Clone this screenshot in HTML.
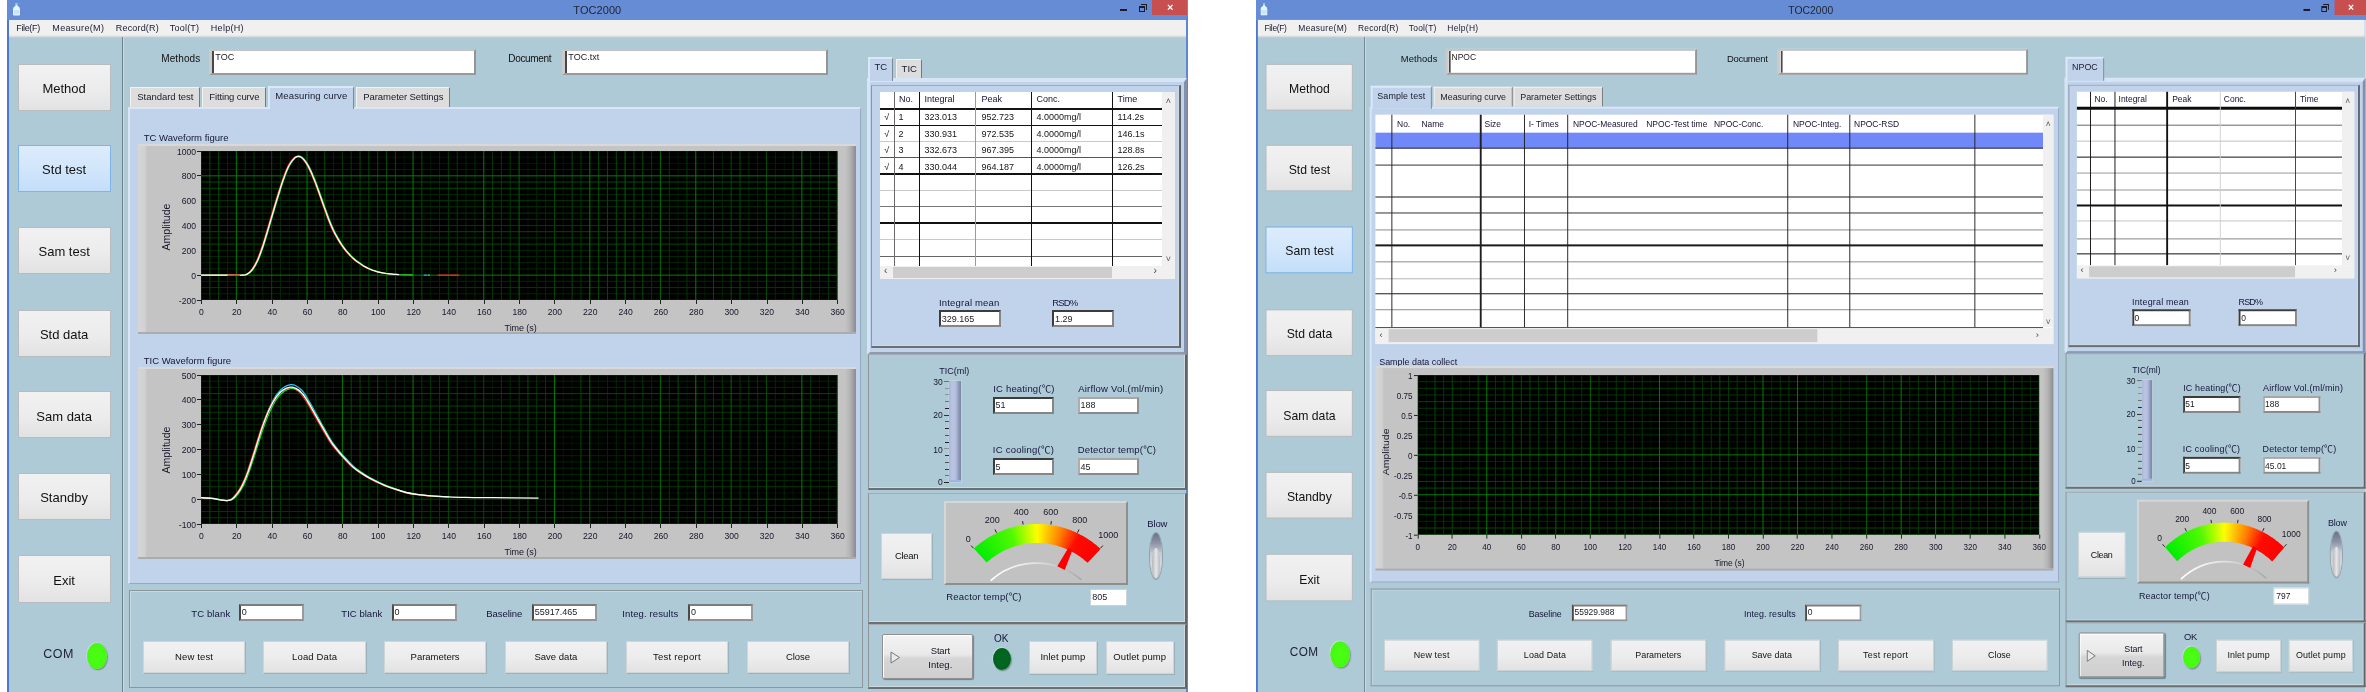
<!DOCTYPE html><html><head><meta charset="utf-8"><title>TOC2000</title><style>
html,body{margin:0;padding:0;background:#fff;}
body{width:2366px;height:692px;overflow:hidden;position:relative;font-family:"Liberation Sans","Noto Sans CJK SC",sans-serif;}
.win{position:absolute;top:0;width:1181px;height:696px;overflow:hidden;transform-origin:0 0;filter:blur(0.45px);}
.win div,.win svg,.win span.t{position:absolute;}
.a{position:absolute;}
span.t{white-space:nowrap;display:block;}
.btn{box-sizing:border-box;border:1px solid #b9bcbe;background:linear-gradient(180deg,#f1f1f1 0,#ececec 55%,#e2e2e2 100%);}
.btn.sm{border-color:#cfd4d6;box-shadow:0.5px 1px 0.5px rgba(120,135,140,.35);}
.btn.act{border-color:#7eb4ea;background:linear-gradient(180deg,#dcecfc 0,#d2e6fb 50%,#c3defa 100%);}
.sbtn{box-sizing:border-box;border:1px solid #8f8f8f;border-radius:2px;
  background:linear-gradient(180deg,#f3f3f3 0,#e9e9e9 45%,#d6d6d6 55%,#cfcfcf 100%);
  box-shadow:inset 1px 1px 0 #fff,1px 1px 1px rgba(0,0,0,.35);}
.inp{box-sizing:border-box;background:#fff;border-style:solid;border-width:2px;
  border-color:#3c3c3c #868686 #868686 #3c3c3c;}
.inp.md{border-color:#7c7c7c #9a9a9a #929292 #4a4a4a;}
.inp.lt{border-color:#a6a6a6 #909090 #8a8a8a #adadad;}
.inp.lg{border-width:2px 2px 2px 3px;border-color:#c4c4c4 #949494 #9a9a9a #cbcbcb;box-shadow:inset 2px 0 0 #484848;}
.tab{box-sizing:border-box;background:#dddddd;border-left:1px solid #f2f2f2;border-top:1px solid #f2f2f2;
  border-right:1.5px solid #767a80;}
.tab.on{background:#c0d3eb;border-left:2px solid #dbe8f8;border-top:2px solid #dbe8f8;border-right:1px solid #7f8894;}
.tpanel{box-sizing:border-box;background:#c0d3eb;border-left:2px solid #d8e6f8;border-top:2px solid #d8e6f8;
  border-right:1px solid #97a8c2;border-bottom:1px solid #97a8c2;}
.tpanel.r{border-left:3px solid #d6e4f6;border-top:4px solid #d6e4f6;border-right:3px solid #8191ad;border-bottom:3px solid #8b9bb6;}
.etch2{box-sizing:border-box;border:1.4px solid #8d969b;box-shadow:inset 1px 1px 0 #c6d8e0;}
.etch{box-sizing:border-box;border-style:solid;border-width:1.5px 2px 2px 1.5px;
  border-color:#a4aaae #5e6468 #6a7074 #8e9498;box-shadow:inset -1px -1px 0 #cedadf;}
.cframe{box-sizing:border-box;border-top:2px solid #d9d9d9;border-bottom:2px solid #acacac;
  background:linear-gradient(90deg,#d6d6d6 0,#d1d1d1 7px,#c4c4c4 9px,#c4c4c4 calc(100% - 11px),#b4b4b4 calc(100% - 6px),#8c8c8c 100%);}
.cframe.g{border:2px solid;border-color:#d6d6d6 #8e8e8e #8e8e8e #d6d6d6;background:#c2c2c2;}
</style></head><body>
<div class="win" style="left:7.3px;"><div style="left:0px;top:0px;width:1180px;height:696px;background:#aecad6;"></div><div style="left:0px;top:0px;width:1181px;height:20px;background:#668cd6;"></div><svg class="a" style="left:4.3px;top:3px" width="9" height="13" viewBox="0 0 9 13"><path d="M3.6 0.3 h1.8 v2.4 c1.6 0.8 2.6 2 2.6 3.6 v5.2 a0.9 0.9 0 0 1 -0.9 0.9 h-5.2 a0.9 0.9 0 0 1 -0.9 -0.9 v-5.2 c0 -1.6 1 -2.8 2.6 -3.6z" fill="#eaf6ff"/><path d="M1.6 7 h5.8 v4.4 h-5.8z" fill="#c4e6ff"/><path d="M3.6 0.3 h1.8 v1.6 h-1.8z" fill="#7fc4ff"/></svg><span class="t" style="left:566.0px;top:2.5px;height:15px;line-height:15px;font-size:11px;color:#1e2432;letter-spacing:0.07px;">TOC2000</span><div style="left:1112.5px;top:8.5px;width:7px;height:2px;background:#1b1b2a;"></div><div style="left:1131.5px;top:6px;width:6px;height:6px;border:1px solid #1b1b2a;border-top-width:2px;box-sizing:border-box;"></div><div style="left:1133.5px;top:4px;width:6px;height:6px;border:1px solid #1b1b2a;border-left:none;border-bottom:none;box-sizing:border-box;"></div><div style="left:1145px;top:0px;width:34.5px;height:15.3px;background:#c84f4f;"></div><span class="t" style="left:1159.8px;top:-0.5px;height:15px;line-height:15px;font-size:11px;color:#fff;font-weight:bold;">×</span><div style="left:1px;top:20px;width:1178px;height:17.5px;background:linear-gradient(180deg,#f0f0f0 0,#f0f0f0 15px,#d2d5d6 17px,#c0ccd0 17.5px);"></div><span class="t" style="left:9.0px;top:21.5px;height:13px;line-height:13px;font-size:9px;color:#1a1a30;letter-spacing:-0.36px;">File(F)</span><span class="t" style="left:45.0px;top:21.5px;height:13px;line-height:13px;font-size:9px;color:#1a1a30;letter-spacing:0.35px;">Measure(M)</span><span class="t" style="left:108.5px;top:21.5px;height:13px;line-height:13px;font-size:9px;color:#1a1a30;letter-spacing:0.17px;">Record(R)</span><span class="t" style="left:162.5px;top:21.5px;height:13px;line-height:13px;font-size:9px;color:#1a1a30;letter-spacing:0.21px;">Tool(T)</span><span class="t" style="left:203.5px;top:21.5px;height:13px;line-height:13px;font-size:9px;color:#1a1a30;letter-spacing:0.29px;">Help(H)</span><div style="left:0px;top:20px;width:1.6px;height:676px;background:#4f78cc;"></div><div style="left:1179px;top:15px;width:2px;height:681px;background:#5f86d2;"></div><div style="left:115px;top:37px;width:1px;height:659px;background:#6f7f88;"></div><div style="left:116px;top:37px;width:1px;height:659px;background:#c9dde6;"></div><div class="btn big" style="left:10.3px;top:63.6px;width:93px;height:47.2px;"></div><span class="t" style="left:35.1px;top:79.8px;height:18px;line-height:18px;font-size:13px;color:#111;">Method</span><div class="btn big act" style="left:10.3px;top:145px;width:93px;height:47.2px;"></div><span class="t" style="left:34.8px;top:161.2px;height:18px;line-height:18px;font-size:13px;color:#111;">Std test</span><div class="btn big" style="left:10.3px;top:227px;width:93px;height:47.2px;"></div><span class="t" style="left:31.2px;top:243.2px;height:18px;line-height:18px;font-size:13px;color:#111;">Sam test</span><div class="btn big" style="left:10.3px;top:309.5px;width:93px;height:47.2px;"></div><span class="t" style="left:32.6px;top:325.7px;height:18px;line-height:18px;font-size:13px;color:#111;">Std data</span><div class="btn big" style="left:10.3px;top:391.3px;width:93px;height:47.2px;"></div><span class="t" style="left:29.0px;top:407.5px;height:18px;line-height:18px;font-size:13px;color:#111;">Sam data</span><div class="btn big" style="left:10.3px;top:472.8px;width:93px;height:47.2px;"></div><span class="t" style="left:32.9px;top:489.0px;height:18px;line-height:18px;font-size:13px;color:#111;">Standby</span><div class="btn big" style="left:10.3px;top:555.4px;width:93px;height:47.2px;"></div><span class="t" style="left:46.0px;top:571.6px;height:18px;line-height:18px;font-size:13px;color:#111;">Exit</span><span class="t" style="left:36.0px;top:644.5px;height:18px;line-height:18px;font-size:12.5px;color:#223;letter-spacing:0.45px;">COM</span><div class="a" style="left:79.3px;top:642.8px;width:20.5px;height:26.5px;border-radius:50%;background:radial-gradient(ellipse at 50% 50%,#4aff12 0,#45f812 80%,#52e030 100%);box-shadow:1px 1.2px 1.2px #7d8f90,-0.6px -0.6px 1px #d6e6ea;"></div><span class="t" style="left:154.0px;top:52.0px;height:14px;line-height:14px;font-size:10px;color:#111;letter-spacing:0.09px;">Methods</span><div class="inp lg" style="left:202px;top:49px;width:267px;height:26px;"></div><span class="t" style="left:208.0px;top:50.6px;height:13px;line-height:13px;font-size:9px;color:#222;">TOC</span><span class="t" style="left:501.0px;top:52.0px;height:14px;line-height:14px;font-size:10px;color:#111;letter-spacing:-0.32px;">Document</span><div class="inp lg" style="left:555px;top:49px;width:266px;height:26px;"></div><span class="t" style="left:561.0px;top:50.6px;height:13px;line-height:13px;font-size:9px;color:#222;">TOC.txt</span><div class="a tab" style="left:123px;top:87px;width:70px;height:20px;"></div><span class="t" style="left:130.0px;top:90.0px;height:13px;line-height:13px;font-size:9.5px;color:#1a1a2a;letter-spacing:-0.04px;">Standard test</span><div class="a tab" style="left:195px;top:87px;width:64px;height:20px;"></div><span class="t" style="left:202.0px;top:90.0px;height:13px;line-height:13px;font-size:9.5px;color:#1a1a2a;letter-spacing:-0.13px;">Fitting curve</span><div class="a tab" style="left:349px;top:87px;width:94px;height:20px;"></div><span class="t" style="left:356.0px;top:90.0px;height:13px;line-height:13px;font-size:9.5px;color:#1a1a2a;letter-spacing:-0.07px;">Parameter Settings</span><div class="a tpanel" style="left:121px;top:107px;width:733px;height:477px;"></div><div class="a tab on" style="left:261px;top:86px;width:86px;height:23px;"></div><span class="t" style="left:268.0px;top:89.4px;height:13px;line-height:13px;font-size:9.5px;color:#1a1a2a;letter-spacing:0.12px;">Measuring curve</span><span class="t" style="left:136.5px;top:131.0px;height:13px;line-height:13px;font-size:9.5px;color:#151530;">TC Waveform figure</span><div class="a cframe" style="left:130.5px;top:144px;width:718px;height:190px;"></div><svg class="a" style="left:194.2px;top:151px" width="636.2" height="149" viewBox="0 0 636.2 149"><rect width="636.2" height="149" fill="#000"/><path d="M88.36 0V149M203.23 0V149M229.74 0V149M326.94 0V149M362.28 0V149M477.15 0V149M503.66 0V149M583.18 0V149M0 12.42H636.2M0 6.21H636.2" stroke="#001800" stroke-width="1" fill="none"/><path d="M26.51 0V149M61.85 0V149M79.53 0V149M97.20 0V149M114.87 0V149M132.54 0V149M238.58 0V149M265.08 0V149M273.92 0V149M335.77 0V149M344.61 0V149M521.33 0V149M547.84 0V149M556.67 0V149M574.35 0V149M609.69 0V149M618.53 0V149M0 142.79H636.2M0 130.38H636.2M0 117.96H636.2M0 111.75H636.2M0 105.54H636.2M0 99.33H636.2M0 43.46H636.2M0 18.62H636.2M0 0.00H636.2" stroke="#002800" stroke-width="1" fill="none"/><path d="M44.18 0V149M53.02 0V149M141.38 0V149M150.21 0V149M247.41 0V149M256.25 0V149M291.59 0V149M300.43 0V149M309.26 0V149M379.95 0V149M450.64 0V149M468.31 0V149M485.99 0V149M592.02 0V149M627.36 0V149M0 149.00H636.2M0 136.58H636.2M0 86.92H636.2M0 74.50H636.2M0 68.29H636.2M0 62.08H636.2M0 55.88H636.2M0 49.67H636.2" stroke="#003a00" stroke-width="1" fill="none"/><path d="M0.00 0V149M8.84 0V149M17.67 0V149M70.69 0V149M123.71 0V149M159.05 0V149M167.89 0V149M176.72 0V149M185.56 0V149M194.39 0V149M220.90 0V149M353.44 0V149M371.12 0V149M397.62 0V149M406.46 0V149M415.30 0V149M432.97 0V149M441.81 0V149M512.49 0V149M530.17 0V149M539.00 0V149M565.51 0V149M636.20 0V149M0 93.12H636.2M0 80.71H636.2M0 37.25H636.2M0 31.04H636.2" stroke="#004c00" stroke-width="1" fill="none"/><path d="M318.10 0V149M424.13 0V149M459.48 0V149" stroke="#006600" stroke-width="1" fill="none"/><path d="M35.34 0V149M106.03 0V149M212.07 0V149M282.76 0V149M388.79 0V149M494.82 0V149M600.86 0V149M0 124.17H636.2M0 24.83H636.2" stroke="#008200" stroke-width="1" fill="none"/><path d="M-0.6 124.2C2.9 124.2 13.8 124.2 20.6 124.2C27.4 124.2 35.9 124.3 40.0 124.2C44.2 124.0 43.6 124.1 45.3 123.2C47.1 122.2 48.9 120.9 50.6 118.6C52.4 116.3 54.2 113.2 55.9 109.3C57.7 105.3 59.5 100.3 61.2 95.0C63.0 89.7 64.8 83.5 66.5 77.6C68.3 71.7 70.1 65.5 71.8 59.6C73.6 53.7 75.4 47.8 77.1 42.2C78.9 36.6 80.7 30.8 82.4 26.1C84.2 21.3 86.0 16.9 87.7 13.7C89.5 10.5 91.6 8.2 93.0 6.8C94.5 5.4 95.4 5.3 96.6 5.2C97.8 5.2 98.8 5.5 100.1 6.5C101.4 7.6 103.1 9.4 104.5 11.6C106.0 13.8 107.5 16.7 108.9 19.9C110.4 23.0 111.9 26.7 113.4 30.5C114.8 34.3 116.3 38.4 117.8 42.5C119.3 46.6 120.7 50.9 122.2 55.0C123.7 59.1 125.1 63.4 126.6 67.2C128.1 71.0 129.6 74.7 131.0 77.9C132.5 81.1 134.0 83.8 135.5 86.4C136.9 89.0 138.4 91.4 139.9 93.6C141.3 95.8 142.8 97.8 144.3 99.7C145.8 101.5 147.2 103.1 148.7 104.6C150.2 106.1 151.7 107.4 153.1 108.7C154.6 109.9 156.1 110.8 157.5 111.9C159.0 112.9 160.5 114.0 162.0 115.0C163.4 115.9 164.9 116.6 166.4 117.3C167.9 118.0 169.3 118.6 170.8 119.2C172.3 119.7 173.7 120.2 175.2 120.6C176.7 121.0 178.2 121.3 179.6 121.6C181.1 121.9 182.6 122.1 184.1 122.4C185.5 122.6 187.7 122.8 188.5 122.9" stroke="#ff2020" stroke-width="1.3" fill="none"/><path d="M236.8 124.2C240.3 124.2 254.5 124.2 258.0 124.2" stroke="#ff2020" stroke-width="1.4" fill="none"/><path d="M226.7 124.2C227.1 124.2 228.5 124.2 228.9 124.2" stroke="#20e020" stroke-width="1.4" fill="none"/><path d="M0.6 124.2C4.2 124.2 15.1 124.2 21.8 124.2C28.6 124.2 37.1 124.3 41.3 124.2C45.4 124.0 44.8 124.1 46.6 123.2C48.3 122.2 50.1 120.9 51.9 118.6C53.6 116.3 55.4 113.2 57.2 109.3C58.9 105.3 60.7 100.3 62.5 95.0C64.2 89.7 66.0 83.5 67.8 77.6C69.5 71.7 71.3 65.5 73.1 59.6C74.8 53.7 76.6 47.8 78.4 42.2C80.1 36.6 81.9 30.8 83.7 26.1C85.4 21.3 87.2 16.9 89.0 13.7C90.7 10.5 92.8 8.2 94.3 6.8C95.8 5.4 96.6 5.3 97.8 5.2C99.0 5.2 100.0 5.5 101.4 6.5C102.7 7.6 104.3 9.4 105.8 11.6C107.2 13.8 108.7 16.7 110.2 19.9C111.7 23.0 113.1 26.7 114.6 30.5C116.1 34.3 117.5 38.4 119.0 42.5C120.5 46.6 122.0 50.9 123.4 55.0C124.9 59.1 126.4 63.4 127.9 67.2C129.3 71.0 130.8 74.7 132.3 77.9C133.7 81.1 135.2 83.8 136.7 86.4C138.2 89.0 139.6 91.4 141.1 93.6C142.6 95.8 144.1 97.8 145.5 99.7C147.0 101.5 148.5 103.1 149.9 104.6C151.4 106.1 152.9 107.4 154.4 108.7C155.8 109.9 157.3 110.8 158.8 111.9C160.3 112.9 161.7 114.0 163.2 115.0C164.7 115.9 166.1 116.6 167.6 117.3C169.1 118.0 170.6 118.6 172.0 119.2C173.5 119.7 175.0 120.2 176.5 120.6C177.9 121.0 179.4 121.3 180.9 121.6C182.3 121.9 183.8 122.1 185.3 122.4C186.8 122.6 188.2 122.7 189.7 122.9C191.2 123.1 192.7 123.2 194.1 123.3C195.6 123.4 197.1 123.5 198.5 123.6C200.0 123.6 201.5 123.7 203.0 123.8C204.4 123.8 205.9 123.8 207.4 123.9C208.9 123.9 211.1 124.0 211.8 124.0" stroke="#20e020" stroke-width="1.3" fill="none"/><path d="M0.0 124.2C3.5 124.2 14.4 124.2 21.2 124.2C28.0 124.2 36.5 124.3 40.6 124.2C44.8 124.0 44.2 124.1 45.9 123.2C47.7 122.2 49.5 120.9 51.2 118.6C53.0 116.3 54.8 113.2 56.6 109.3C58.3 105.4 60.1 100.3 61.9 95.0C63.6 89.7 65.4 83.5 67.2 77.7C68.9 71.8 70.7 65.6 72.5 59.7C74.2 53.8 76.0 47.9 77.8 42.3C79.5 36.7 81.3 30.9 83.1 26.2C84.8 21.4 86.6 17.0 88.4 13.8C90.1 10.6 92.2 8.4 93.7 6.9C95.1 5.5 96.0 5.4 97.2 5.3C98.4 5.3 99.4 5.6 100.7 6.6C102.1 7.7 103.7 9.5 105.1 11.7C106.6 13.9 108.1 16.8 109.6 20.0C111.0 23.1 112.5 26.8 114.0 30.6C115.5 34.4 116.9 38.5 118.4 42.6C119.9 46.7 121.3 51.0 122.8 55.1C124.3 59.2 125.8 63.4 127.2 67.2C128.7 71.1 130.2 74.7 131.7 77.9C133.1 81.1 134.6 83.8 136.1 86.4C137.5 89.1 139.0 91.5 140.5 93.7C142.0 95.9 143.4 97.9 144.9 99.7C146.4 101.5 147.9 103.1 149.3 104.6C150.8 106.1 152.3 107.5 153.7 108.7C155.2 109.9 156.7 110.9 158.2 111.9C159.6 113.0 161.1 114.1 162.6 115.0C164.1 115.9 165.5 116.6 167.0 117.3C168.5 118.0 169.9 118.6 171.4 119.2C172.9 119.7 174.4 120.2 175.8 120.6C177.3 121.0 178.8 121.3 180.3 121.6C181.7 121.9 183.2 122.1 184.7 122.4C186.1 122.6 187.6 122.7 189.1 122.9C190.6 123.1 192.0 123.2 193.5 123.3C195.0 123.4 197.2 123.5 197.9 123.6" stroke="#ffffff" stroke-width="1.2" fill="none"/><path d="M26.5 124.2C28.6 124.2 36.8 124.2 38.9 124.2" stroke="#ff2020" stroke-width="1.4" fill="none"/><path d="M222.7 124.2C223.3 124.2 225.6 124.2 226.2 124.2" stroke="#3090ff" stroke-width="1.4" fill="none"/></svg><span class="t" style="left:169.6px;top:145.5px;height:12px;line-height:12px;font-size:8.6px;color:#16162a;">1000</span><div style="left:190.2px;top:150.5px;width:4px;height:1px;background:#222;"></div><span class="t" style="left:174.4px;top:170.3px;height:12px;line-height:12px;font-size:8.6px;color:#16162a;">800</span><div style="left:190.2px;top:175.333px;width:4px;height:1px;background:#222;"></div><span class="t" style="left:174.4px;top:195.2px;height:12px;line-height:12px;font-size:8.6px;color:#16162a;">600</span><span class="t" style="left:174.4px;top:220.0px;height:12px;line-height:12px;font-size:8.6px;color:#16162a;">400</span><span class="t" style="left:174.4px;top:244.8px;height:12px;line-height:12px;font-size:8.6px;color:#16162a;">200</span><span class="t" style="left:183.9px;top:269.7px;height:12px;line-height:12px;font-size:8.6px;color:#16162a;">0</span><div style="left:190.2px;top:274.667px;width:4px;height:1px;background:#222;"></div><span class="t" style="left:171.5px;top:294.5px;height:12px;line-height:12px;font-size:8.6px;color:#16162a;">-200</span><div style="left:190.2px;top:299.5px;width:4px;height:1px;background:#222;"></div><div style="left:193.7px;top:300px;width:1px;height:4px;background:#222;"></div><span class="t" style="left:191.8px;top:306.0px;height:12px;line-height:12px;font-size:8.6px;color:#16162a;">0</span><div style="left:229.044px;top:300px;width:1px;height:4px;background:#222;"></div><span class="t" style="left:224.8px;top:306.0px;height:12px;line-height:12px;font-size:8.6px;color:#16162a;">20</span><div style="left:264.389px;top:300px;width:1px;height:4px;background:#222;"></div><span class="t" style="left:260.1px;top:306.0px;height:12px;line-height:12px;font-size:8.6px;color:#16162a;">40</span><div style="left:299.733px;top:300px;width:1px;height:4px;background:#222;"></div><span class="t" style="left:295.5px;top:306.0px;height:12px;line-height:12px;font-size:8.6px;color:#16162a;">60</span><div style="left:335.078px;top:300px;width:1px;height:4px;background:#222;"></div><span class="t" style="left:330.8px;top:306.0px;height:12px;line-height:12px;font-size:8.6px;color:#16162a;">80</span><div style="left:370.422px;top:300px;width:1px;height:4px;background:#222;"></div><span class="t" style="left:363.7px;top:306.0px;height:12px;line-height:12px;font-size:8.6px;color:#16162a;">100</span><div style="left:405.767px;top:300px;width:1px;height:4px;background:#222;"></div><span class="t" style="left:399.1px;top:306.0px;height:12px;line-height:12px;font-size:8.6px;color:#16162a;">120</span><div style="left:441.111px;top:300px;width:1px;height:4px;background:#222;"></div><span class="t" style="left:434.4px;top:306.0px;height:12px;line-height:12px;font-size:8.6px;color:#16162a;">140</span><div style="left:476.456px;top:300px;width:1px;height:4px;background:#222;"></div><span class="t" style="left:469.8px;top:306.0px;height:12px;line-height:12px;font-size:8.6px;color:#16162a;">160</span><div style="left:511.8px;top:300px;width:1px;height:4px;background:#222;"></div><span class="t" style="left:505.1px;top:306.0px;height:12px;line-height:12px;font-size:8.6px;color:#16162a;">180</span><div style="left:547.144px;top:300px;width:1px;height:4px;background:#222;"></div><span class="t" style="left:540.5px;top:306.0px;height:12px;line-height:12px;font-size:8.6px;color:#16162a;">200</span><div style="left:582.489px;top:300px;width:1px;height:4px;background:#222;"></div><span class="t" style="left:575.8px;top:306.0px;height:12px;line-height:12px;font-size:8.6px;color:#16162a;">220</span><div style="left:617.833px;top:300px;width:1px;height:4px;background:#222;"></div><span class="t" style="left:611.2px;top:306.0px;height:12px;line-height:12px;font-size:8.6px;color:#16162a;">240</span><div style="left:653.178px;top:300px;width:1px;height:4px;background:#222;"></div><span class="t" style="left:646.5px;top:306.0px;height:12px;line-height:12px;font-size:8.6px;color:#16162a;">260</span><div style="left:688.522px;top:300px;width:1px;height:4px;background:#222;"></div><span class="t" style="left:681.8px;top:306.0px;height:12px;line-height:12px;font-size:8.6px;color:#16162a;">280</span><div style="left:723.867px;top:300px;width:1px;height:4px;background:#222;"></div><span class="t" style="left:717.2px;top:306.0px;height:12px;line-height:12px;font-size:8.6px;color:#16162a;">300</span><div style="left:759.211px;top:300px;width:1px;height:4px;background:#222;"></div><span class="t" style="left:752.5px;top:306.0px;height:12px;line-height:12px;font-size:8.6px;color:#16162a;">320</span><div style="left:794.556px;top:300px;width:1px;height:4px;background:#222;"></div><span class="t" style="left:787.9px;top:306.0px;height:12px;line-height:12px;font-size:8.6px;color:#16162a;">340</span><div style="left:829.9px;top:300px;width:1px;height:4px;background:#222;"></div><span class="t" style="left:823.2px;top:306.0px;height:12px;line-height:12px;font-size:8.6px;color:#16162a;">360</span><span class="t" style="left:497.3px;top:321.5px;height:13px;line-height:13px;font-size:9px;color:#16162a;letter-spacing:-0.08px;">Time (s)</span><span class="t" style="left:158.7px;top:226.5px;height:0;width:0;overflow:visible;transform:rotate(-90deg);transform-origin:0 0;"><span style="position:absolute;left:-23.5px;top:-6.5px;height:13px;line-height:13px;font-size:10.5px;color:#16162a;letter-spacing:0.03px;white-space:nowrap">Amplitude</span></span><span class="t" style="left:136.5px;top:354.0px;height:13px;line-height:13px;font-size:9.5px;color:#151530;">TIC Waveform figure</span><div class="a cframe" style="left:130.5px;top:366.5px;width:718px;height:192px;"></div><svg class="a" style="left:194.2px;top:375px" width="636.2" height="149" viewBox="0 0 636.2 149"><rect width="636.2" height="149" fill="#000"/><path d="M97.20 0V149M132.54 0V149M265.08 0V149M291.59 0V149M362.28 0V149M371.12 0V149M397.62 0V149M485.99 0V149M592.02 0V149M618.53 0V149M0 117.96H636.2M0 68.29H636.2M0 62.08H636.2" stroke="#001800" stroke-width="1" fill="none"/><path d="M26.51 0V149M53.02 0V149M88.36 0V149M123.71 0V149M185.56 0V149M203.23 0V149M309.26 0V149M406.46 0V149M415.30 0V149M432.97 0V149M450.64 0V149M574.35 0V149M583.18 0V149M627.36 0V149M0 130.38H636.2M0 105.54H636.2M0 99.33H636.2M0 93.12H636.2M0 86.92H636.2M0 80.71H636.2M0 74.50H636.2M0 49.67H636.2M0 43.46H636.2M0 24.83H636.2M0 12.42H636.2M0 6.21H636.2" stroke="#002800" stroke-width="1" fill="none"/><path d="M0.00 0V149M17.67 0V149M44.18 0V149M61.85 0V149M79.53 0V149M114.87 0V149M167.89 0V149M194.39 0V149M220.90 0V149M229.74 0V149M238.58 0V149M256.25 0V149M273.92 0V149M300.43 0V149M318.10 0V149M335.77 0V149M344.61 0V149M424.13 0V149M441.81 0V149M468.31 0V149M503.66 0V149M512.49 0V149M521.33 0V149M539.00 0V149M547.84 0V149M556.67 0V149M609.69 0V149M636.20 0V149M0 142.79H636.2M0 136.58H636.2M0 111.75H636.2M0 55.88H636.2M0 37.25H636.2M0 0.00H636.2" stroke="#003a00" stroke-width="1" fill="none"/><path d="M8.84 0V149M35.34 0V149M106.03 0V149M150.21 0V149M159.05 0V149M176.72 0V149M247.41 0V149M282.76 0V149M326.94 0V149M379.95 0V149M477.15 0V149M565.51 0V149M0 149.00H636.2M0 124.17H636.2M0 31.04H636.2M0 18.62H636.2" stroke="#004c00" stroke-width="1" fill="none"/><path d="M388.79 0V149M459.48 0V149M530.17 0V149" stroke="#006600" stroke-width="1" fill="none"/><path d="M70.69 0V149M141.38 0V149M212.07 0V149M353.44 0V149M494.82 0V149M600.86 0V149" stroke="#008200" stroke-width="1" fill="none"/><path d="M0.4 122.6C2.1 122.8 7.7 123.0 11.0 123.4C14.2 123.8 17.3 124.5 19.8 124.9C22.3 125.3 24.1 125.8 26.0 125.7C27.9 125.6 29.5 125.4 31.3 124.2C33.0 123.0 34.8 121.0 36.6 118.6C38.4 116.1 40.2 113.3 42.1 109.4C43.9 105.6 45.4 101.7 47.5 95.7C49.6 89.7 52.3 80.9 54.6 73.4C57.0 65.9 59.3 57.4 61.7 50.6C64.0 43.7 66.4 37.5 68.7 32.3C71.1 27.1 73.3 22.9 75.6 19.6C77.9 16.3 80.2 14.1 82.5 12.5C84.9 10.8 87.5 10.0 89.6 9.7C91.7 9.4 93.0 9.7 94.9 10.7C96.8 11.7 99.0 13.2 101.1 15.5C103.1 17.9 105.2 21.3 107.3 24.7C109.3 28.1 111.1 31.6 113.5 35.8C115.8 40.1 118.5 44.9 121.4 50.1C124.4 55.2 127.7 61.8 131.1 66.8C134.5 71.8 138.2 75.9 141.7 80.0C145.3 84.1 148.7 87.9 152.3 91.2C156.0 94.4 160.3 97.2 163.8 99.5C167.4 101.9 170.0 103.3 173.5 105.1C177.1 107.0 181.5 109.0 185.0 110.5C188.6 111.9 191.4 112.9 194.7 114.0C198.1 115.2 201.8 116.4 205.4 117.3C208.9 118.2 211.8 118.8 216.0 119.3C220.1 119.9 224.8 120.4 230.1 120.9C235.4 121.3 244.8 121.7 247.8 121.9" stroke="#30c0ff" stroke-width="1.2" fill="none"/><path d="M-0.9 122.7C0.9 122.8 6.5 123.1 9.7 123.4C13.0 123.8 16.1 124.5 18.6 124.9C21.1 125.3 22.8 125.8 24.7 125.6C26.7 125.5 28.3 125.3 30.0 124.2C31.8 123.0 33.5 121.1 35.3 118.7C37.1 116.4 39.0 113.6 40.8 109.9C42.6 106.2 44.2 102.4 46.3 96.6C48.4 90.7 51.0 82.2 53.4 74.9C55.7 67.6 58.1 59.4 60.4 52.7C62.8 46.1 65.2 40.0 67.5 35.0C69.8 30.0 72.1 25.9 74.4 22.7C76.7 19.5 79.0 17.4 81.3 15.8C83.6 14.2 86.3 13.4 88.4 13.1C90.4 12.8 91.7 13.1 93.7 14.0C95.6 15.0 97.8 16.5 99.8 18.7C101.9 21.0 104.0 24.3 106.0 27.6C108.1 30.9 109.9 34.3 112.2 38.4C114.6 42.5 117.2 47.2 120.2 52.2C123.1 57.2 126.5 63.6 129.9 68.5C133.3 73.3 137.0 77.4 140.5 81.3C144.0 85.2 147.4 89.0 151.1 92.1C154.8 95.3 159.1 98.0 162.6 100.3C166.1 102.5 168.8 103.9 172.3 105.7C175.8 107.5 180.3 109.4 183.8 110.9C187.3 112.3 190.1 113.2 193.5 114.3C196.9 115.4 200.6 116.7 204.1 117.5C207.6 118.4 210.6 118.9 214.7 119.5C218.8 120.1 223.6 120.6 228.9 121.0C234.2 121.4 243.6 121.8 246.5 121.9" stroke="#ff2020" stroke-width="1.3" fill="none"/><path d="M1.1 122.7C2.8 122.8 8.4 123.1 11.7 123.4C14.9 123.8 18.0 124.5 20.5 124.9C23.0 125.3 24.8 125.8 26.7 125.6C28.6 125.5 30.2 125.3 32.0 124.2C33.8 123.0 35.5 121.1 37.3 118.8C39.1 116.4 40.9 113.6 42.8 109.9C44.6 106.3 46.2 102.5 48.2 96.7C50.3 90.9 53.0 82.4 55.3 75.1C57.7 67.8 60.0 59.6 62.4 53.0C64.7 46.4 67.1 40.3 69.5 35.3C71.8 30.4 74.0 26.3 76.3 23.1C78.6 19.9 80.9 17.8 83.2 16.2C85.6 14.6 88.2 13.8 90.3 13.5C92.4 13.2 93.7 13.6 95.6 14.5C97.5 15.4 99.7 16.9 101.8 19.2C103.9 21.4 105.9 24.7 108.0 28.0C110.0 31.3 111.8 34.7 114.2 38.8C116.5 42.9 119.2 47.5 122.1 52.5C125.1 57.5 128.4 63.9 131.8 68.7C135.2 73.5 138.9 77.5 142.4 81.5C146.0 85.4 149.4 89.1 153.0 92.3C156.7 95.4 161.0 98.1 164.5 100.4C168.1 102.6 170.7 104.0 174.2 105.8C177.8 107.5 182.2 109.5 185.7 110.9C189.3 112.3 192.1 113.2 195.5 114.4C198.8 115.5 202.5 116.7 206.1 117.5C209.6 118.4 212.5 118.9 216.7 119.5C220.8 120.1 225.5 120.6 230.8 121.0C236.1 121.4 245.5 121.8 248.5 122.0" stroke="#20e020" stroke-width="1.2" fill="none"/><path d="M0.0 122.7C1.8 122.8 7.4 123.0 10.6 123.4C13.8 123.8 16.9 124.5 19.4 124.9C21.9 125.3 23.7 125.8 25.6 125.7C27.5 125.5 29.2 125.3 30.9 124.2C32.7 123.0 34.4 121.1 36.2 118.7C38.0 116.3 39.9 113.5 41.7 109.8C43.5 106.0 45.1 102.2 47.2 96.4C49.3 90.5 51.9 81.9 54.3 74.5C56.6 67.1 59.0 58.9 61.3 52.1C63.7 45.4 66.1 39.3 68.4 34.3C70.7 29.2 73.0 25.1 75.3 21.9C77.6 18.6 79.8 16.5 82.2 14.9C84.5 13.3 87.2 12.5 89.2 12.2C91.3 11.9 92.6 12.2 94.5 13.2C96.5 14.1 98.7 15.6 100.7 17.9C102.8 20.2 104.9 23.5 106.9 26.8C109.0 30.1 110.7 33.6 113.1 37.7C115.5 41.9 118.1 46.6 121.1 51.7C124.0 56.7 127.4 63.2 130.8 68.0C134.2 72.9 137.8 77.0 141.4 81.0C144.9 84.9 148.3 88.7 152.0 91.9C155.7 95.1 159.9 97.8 163.5 100.1C167.0 102.4 169.7 103.8 173.2 105.5C176.7 107.3 181.1 109.3 184.7 110.8C188.2 112.2 191.0 113.1 194.4 114.2C197.8 115.4 201.5 116.6 205.0 117.5C208.5 118.3 211.5 118.9 215.6 119.4C219.7 120.0 224.4 120.5 229.7 120.9C235.0 121.4 241.5 121.7 247.4 121.9C253.3 122.2 257.7 122.3 265.1 122.4C272.4 122.6 279.5 122.6 291.6 122.7C303.7 122.8 329.9 123.1 337.5 123.2" stroke="#ffffff" stroke-width="1.3" fill="none"/></svg><span class="t" style="left:174.4px;top:369.5px;height:12px;line-height:12px;font-size:8.6px;color:#16162a;">500</span><div style="left:190.2px;top:374.5px;width:4px;height:1px;background:#222;"></div><span class="t" style="left:174.4px;top:394.3px;height:12px;line-height:12px;font-size:8.6px;color:#16162a;">400</span><div style="left:190.2px;top:399.333px;width:4px;height:1px;background:#222;"></div><span class="t" style="left:174.4px;top:419.2px;height:12px;line-height:12px;font-size:8.6px;color:#16162a;">300</span><div style="left:190.2px;top:424.167px;width:4px;height:1px;background:#222;"></div><span class="t" style="left:174.4px;top:444.0px;height:12px;line-height:12px;font-size:8.6px;color:#16162a;">200</span><div style="left:190.2px;top:449px;width:4px;height:1px;background:#222;"></div><span class="t" style="left:174.4px;top:468.8px;height:12px;line-height:12px;font-size:8.6px;color:#16162a;">100</span><div style="left:190.2px;top:473.833px;width:4px;height:1px;background:#222;"></div><span class="t" style="left:183.9px;top:493.7px;height:12px;line-height:12px;font-size:8.6px;color:#16162a;">0</span><div style="left:190.2px;top:498.667px;width:4px;height:1px;background:#222;"></div><span class="t" style="left:171.5px;top:518.5px;height:12px;line-height:12px;font-size:8.6px;color:#16162a;">-100</span><div style="left:190.2px;top:523.5px;width:4px;height:1px;background:#222;"></div><div style="left:193.7px;top:524px;width:1px;height:4px;background:#222;"></div><span class="t" style="left:191.8px;top:530.0px;height:12px;line-height:12px;font-size:8.6px;color:#16162a;">0</span><div style="left:229.044px;top:524px;width:1px;height:4px;background:#222;"></div><span class="t" style="left:224.8px;top:530.0px;height:12px;line-height:12px;font-size:8.6px;color:#16162a;">20</span><div style="left:264.389px;top:524px;width:1px;height:4px;background:#222;"></div><span class="t" style="left:260.1px;top:530.0px;height:12px;line-height:12px;font-size:8.6px;color:#16162a;">40</span><div style="left:299.733px;top:524px;width:1px;height:4px;background:#222;"></div><span class="t" style="left:295.5px;top:530.0px;height:12px;line-height:12px;font-size:8.6px;color:#16162a;">60</span><div style="left:335.078px;top:524px;width:1px;height:4px;background:#222;"></div><span class="t" style="left:330.8px;top:530.0px;height:12px;line-height:12px;font-size:8.6px;color:#16162a;">80</span><div style="left:370.422px;top:524px;width:1px;height:4px;background:#222;"></div><span class="t" style="left:363.7px;top:530.0px;height:12px;line-height:12px;font-size:8.6px;color:#16162a;">100</span><div style="left:405.767px;top:524px;width:1px;height:4px;background:#222;"></div><span class="t" style="left:399.1px;top:530.0px;height:12px;line-height:12px;font-size:8.6px;color:#16162a;">120</span><div style="left:441.111px;top:524px;width:1px;height:4px;background:#222;"></div><span class="t" style="left:434.4px;top:530.0px;height:12px;line-height:12px;font-size:8.6px;color:#16162a;">140</span><div style="left:476.456px;top:524px;width:1px;height:4px;background:#222;"></div><span class="t" style="left:469.8px;top:530.0px;height:12px;line-height:12px;font-size:8.6px;color:#16162a;">160</span><div style="left:511.8px;top:524px;width:1px;height:4px;background:#222;"></div><span class="t" style="left:505.1px;top:530.0px;height:12px;line-height:12px;font-size:8.6px;color:#16162a;">180</span><div style="left:547.144px;top:524px;width:1px;height:4px;background:#222;"></div><span class="t" style="left:540.5px;top:530.0px;height:12px;line-height:12px;font-size:8.6px;color:#16162a;">200</span><div style="left:582.489px;top:524px;width:1px;height:4px;background:#222;"></div><span class="t" style="left:575.8px;top:530.0px;height:12px;line-height:12px;font-size:8.6px;color:#16162a;">220</span><div style="left:617.833px;top:524px;width:1px;height:4px;background:#222;"></div><span class="t" style="left:611.2px;top:530.0px;height:12px;line-height:12px;font-size:8.6px;color:#16162a;">240</span><div style="left:653.178px;top:524px;width:1px;height:4px;background:#222;"></div><span class="t" style="left:646.5px;top:530.0px;height:12px;line-height:12px;font-size:8.6px;color:#16162a;">260</span><div style="left:688.522px;top:524px;width:1px;height:4px;background:#222;"></div><span class="t" style="left:681.8px;top:530.0px;height:12px;line-height:12px;font-size:8.6px;color:#16162a;">280</span><div style="left:723.867px;top:524px;width:1px;height:4px;background:#222;"></div><span class="t" style="left:717.2px;top:530.0px;height:12px;line-height:12px;font-size:8.6px;color:#16162a;">300</span><div style="left:759.211px;top:524px;width:1px;height:4px;background:#222;"></div><span class="t" style="left:752.5px;top:530.0px;height:12px;line-height:12px;font-size:8.6px;color:#16162a;">320</span><div style="left:794.556px;top:524px;width:1px;height:4px;background:#222;"></div><span class="t" style="left:787.9px;top:530.0px;height:12px;line-height:12px;font-size:8.6px;color:#16162a;">340</span><div style="left:829.9px;top:524px;width:1px;height:4px;background:#222;"></div><span class="t" style="left:823.2px;top:530.0px;height:12px;line-height:12px;font-size:8.6px;color:#16162a;">360</span><span class="t" style="left:497.3px;top:545.5px;height:13px;line-height:13px;font-size:9px;color:#16162a;letter-spacing:-0.08px;">Time (s)</span><span class="t" style="left:158.7px;top:450px;height:0;width:0;overflow:visible;transform:rotate(-90deg);transform-origin:0 0;"><span style="position:absolute;left:-23.5px;top:-6.5px;height:13px;line-height:13px;font-size:10.5px;color:#16162a;letter-spacing:0.03px;white-space:nowrap">Amplitude</span></span><div class="a etch2" style="left:122px;top:589.5px;width:733.3px;height:98.5px;"></div><span class="t" style="left:184.0px;top:607.0px;height:13px;line-height:13px;font-size:9.5px;color:#15153a;letter-spacing:0.12px;">TC blank</span><div class="inp md" style="left:231.7px;top:603.7px;width:65.4px;height:17px;"></div><span class="t" style="left:234.4px;top:606.1px;height:13px;line-height:13px;font-size:9px;color:#222;">0</span><span class="t" style="left:334.0px;top:607.0px;height:13px;line-height:13px;font-size:9.5px;color:#15153a;letter-spacing:0.04px;">TIC blank</span><div class="inp md" style="left:384.5px;top:603.7px;width:65.2px;height:17px;"></div><span class="t" style="left:387.2px;top:606.1px;height:13px;line-height:13px;font-size:9px;color:#222;">0</span><span class="t" style="left:479.0px;top:607.0px;height:13px;line-height:13px;font-size:9.5px;color:#15153a;letter-spacing:-0.06px;">Baseline</span><div class="inp md" style="left:524.7px;top:603.7px;width:65.2px;height:17px;"></div><span class="t" style="left:527.4px;top:606.1px;height:13px;line-height:13px;font-size:9px;color:#222;">55917.465</span><span class="t" style="left:615.0px;top:607.0px;height:13px;line-height:13px;font-size:9.5px;color:#15153a;letter-spacing:0.12px;">Integ. results</span><div class="inp md" style="left:681px;top:603.7px;width:65.2px;height:17px;"></div><span class="t" style="left:683.7px;top:606.1px;height:13px;line-height:13px;font-size:9px;color:#222;">0</span><div class="btn sm" style="left:135.7px;top:641.3px;width:102.3px;height:32.2px;"></div><span class="t" style="left:167.8px;top:650.1px;height:13px;line-height:13px;font-size:9.5px;color:#111;letter-spacing:0.13px;">New test</span><div class="btn sm" style="left:256.2px;top:641.3px;width:102.3px;height:32.2px;"></div><span class="t" style="left:284.8px;top:650.1px;height:13px;line-height:13px;font-size:9.5px;color:#111;letter-spacing:0.13px;">Load Data</span><div class="btn sm" style="left:376.7px;top:641.3px;width:102.3px;height:32.2px;"></div><span class="t" style="left:403.3px;top:650.1px;height:13px;line-height:13px;font-size:9.5px;color:#111;letter-spacing:-0.01px;">Parameters</span><div class="btn sm" style="left:497.5px;top:641.3px;width:102.3px;height:32.2px;"></div><span class="t" style="left:527.1px;top:650.1px;height:13px;line-height:13px;font-size:9.5px;color:#111;letter-spacing:0.02px;">Save data</span><div class="btn sm" style="left:618.5px;top:641.3px;width:102.3px;height:32.2px;"></div><span class="t" style="left:645.6px;top:650.1px;height:13px;line-height:13px;font-size:9.5px;color:#111;letter-spacing:0.28px;">Test report</span><div class="btn sm" style="left:739.5px;top:641.3px;width:102.3px;height:32.2px;"></div><span class="t" style="left:778.6px;top:650.1px;height:13px;line-height:13px;font-size:9.5px;color:#111;letter-spacing:-0.06px;">Close</span><div class="a tab" style="left:889px;top:59px;width:26px;height:21px;"></div><span class="t" style="left:894.3px;top:61.5px;height:13px;line-height:13px;font-size:9.5px;color:#1a1a2a;">TIC</span><div class="a tpanel r" style="left:860px;top:78px;width:319.5px;height:276.5px;"></div><div class="a tab on" style="left:861px;top:57px;width:25px;height:24px;"></div><span class="t" style="left:867.2px;top:59.8px;height:13px;line-height:13px;font-size:9.5px;color:#1a1a2a;">TC</span><div class="etch" style="left:864px;top:85px;width:309.5px;height:263px;"></div><div style="left:872.5px;top:92px;width:295px;height:187px;background:#fff;"></div><div style="left:872.5px;top:107.6px;width:282px;height:2px;background:#151515;"></div><div style="left:872.5px;top:124.6px;width:282px;height:1.4px;background:#111;"></div><div style="left:872.5px;top:140.7px;width:282px;height:1px;background:#c9c9c9;"></div><div style="left:872.5px;top:157.2px;width:282px;height:1px;background:#555;"></div><div style="left:872.5px;top:173.45px;width:282px;height:1.5px;background:#111;"></div><div style="left:872.5px;top:189.9px;width:282px;height:1px;background:#c9c9c9;"></div><div style="left:872.5px;top:206.4px;width:282px;height:1px;background:#777;"></div><div style="left:872.5px;top:222.05px;width:282px;height:1.5px;background:#111;"></div><div style="left:872.5px;top:239px;width:282px;height:1px;background:#c9c9c9;"></div><div style="left:872.5px;top:255.5px;width:282px;height:1px;background:#666;"></div><div style="left:886.5px;top:92px;width:1px;height:173.5px;background:#6a6a6a;"></div><div style="left:911.3px;top:92px;width:1.4px;height:173.5px;background:#111;"></div><div style="left:968.2px;top:92px;width:1px;height:173.5px;background:#9a9a9a;"></div><div style="left:1023.5px;top:92px;width:1.4px;height:173.5px;background:#111;"></div><div style="left:1104.5px;top:92px;width:1.4px;height:173.5px;background:#111;"></div><div style="left:1154.5px;top:92px;width:13px;height:173.5px;background:#f0f0f0;"></div><span class="t" style="left:1158.4px;top:94.5px;height:13px;line-height:13px;font-size:9px;color:#555;">˄</span><span class="t" style="left:1158.4px;top:252.5px;height:13px;line-height:13px;font-size:9px;color:#555;">˅</span><div style="left:872.5px;top:265.5px;width:295px;height:13px;background:#f0f0f0;"></div><div style="left:886px;top:266.5px;width:218.5px;height:11px;background:#cdcdcd;"></div><span class="t" style="left:876.8px;top:264.0px;height:14px;line-height:14px;font-size:10px;color:#444;">‹</span><span class="t" style="left:1146.3px;top:264.0px;height:14px;line-height:14px;font-size:10px;color:#444;">›</span><span class="t" style="left:891.7px;top:92.5px;height:13px;line-height:13px;font-size:9px;color:#1a1030;">No.</span><span class="t" style="left:917.3px;top:92.5px;height:13px;line-height:13px;font-size:9px;color:#1a1030;">Integral</span><span class="t" style="left:974.3px;top:92.5px;height:13px;line-height:13px;font-size:9px;color:#1a1030;">Peak</span><span class="t" style="left:1029.3px;top:92.5px;height:13px;line-height:13px;font-size:9px;color:#1a1030;">Conc.</span><span class="t" style="left:1110.3px;top:92.5px;height:13px;line-height:13px;font-size:9px;color:#1a1030;">Time</span><span class="t" style="left:877.0px;top:111.3px;height:13px;line-height:13px;font-size:9px;color:#151515;">√</span><span class="t" style="left:891.3px;top:111.3px;height:13px;line-height:13px;font-size:9px;color:#151515;">1</span><span class="t" style="left:917.3px;top:111.3px;height:13px;line-height:13px;font-size:9px;color:#151515;">323.013</span><span class="t" style="left:974.3px;top:111.3px;height:13px;line-height:13px;font-size:9px;color:#151515;">952.723</span><span class="t" style="left:1029.3px;top:111.3px;height:13px;line-height:13px;font-size:9px;color:#151515;">4.0000mg/l</span><span class="t" style="left:1110.3px;top:111.3px;height:13px;line-height:13px;font-size:9px;color:#151515;">114.2s</span><span class="t" style="left:877.0px;top:127.7px;height:13px;line-height:13px;font-size:9px;color:#151515;">√</span><span class="t" style="left:891.3px;top:127.7px;height:13px;line-height:13px;font-size:9px;color:#151515;">2</span><span class="t" style="left:917.3px;top:127.7px;height:13px;line-height:13px;font-size:9px;color:#151515;">330.931</span><span class="t" style="left:974.3px;top:127.7px;height:13px;line-height:13px;font-size:9px;color:#151515;">972.535</span><span class="t" style="left:1029.3px;top:127.7px;height:13px;line-height:13px;font-size:9px;color:#151515;">4.0000mg/l</span><span class="t" style="left:1110.3px;top:127.7px;height:13px;line-height:13px;font-size:9px;color:#151515;">146.1s</span><span class="t" style="left:877.0px;top:144.1px;height:13px;line-height:13px;font-size:9px;color:#151515;">√</span><span class="t" style="left:891.3px;top:144.1px;height:13px;line-height:13px;font-size:9px;color:#151515;">3</span><span class="t" style="left:917.3px;top:144.1px;height:13px;line-height:13px;font-size:9px;color:#151515;">332.673</span><span class="t" style="left:974.3px;top:144.1px;height:13px;line-height:13px;font-size:9px;color:#151515;">967.395</span><span class="t" style="left:1029.3px;top:144.1px;height:13px;line-height:13px;font-size:9px;color:#151515;">4.0000mg/l</span><span class="t" style="left:1110.3px;top:144.1px;height:13px;line-height:13px;font-size:9px;color:#151515;">128.8s</span><span class="t" style="left:877.0px;top:160.5px;height:13px;line-height:13px;font-size:9px;color:#151515;">√</span><span class="t" style="left:891.3px;top:160.5px;height:13px;line-height:13px;font-size:9px;color:#151515;">4</span><span class="t" style="left:917.3px;top:160.5px;height:13px;line-height:13px;font-size:9px;color:#151515;">330.044</span><span class="t" style="left:974.3px;top:160.5px;height:13px;line-height:13px;font-size:9px;color:#151515;">964.187</span><span class="t" style="left:1029.3px;top:160.5px;height:13px;line-height:13px;font-size:9px;color:#151515;">4.0000mg/l</span><span class="t" style="left:1110.3px;top:160.5px;height:13px;line-height:13px;font-size:9px;color:#151515;">126.2s</span><span class="t" style="left:931.7px;top:295.5px;height:13px;line-height:13px;font-size:9.5px;color:#15153a;letter-spacing:0.19px;">Integral mean</span><div class="inp" style="left:931.7px;top:310.2px;width:62.3px;height:17.2px;"></div><span class="t" style="left:934.4px;top:312.7px;height:13px;line-height:13px;font-size:9px;color:#222;">329.165</span><span class="t" style="left:1045.0px;top:295.5px;height:13px;line-height:13px;font-size:9.5px;color:#15153a;letter-spacing:-0.88px;">RSD%</span><div class="inp" style="left:1045px;top:310.2px;width:61.7px;height:17.2px;"></div><span class="t" style="left:1047.7px;top:312.7px;height:13px;line-height:13px;font-size:9px;color:#222;">1.29</span><div class="etch" style="left:860.5px;top:354.3px;width:319px;height:136.2px;"></div><span class="t" style="left:932.0px;top:364.5px;height:13px;line-height:13px;font-size:9px;color:#15153a;letter-spacing:0.00px;">TIC(ml)</span><div style="left:940.6px;top:379.8px;width:13.7px;height:103.5px;background:#bad4dd;"></div><div style="left:941.6px;top:380.8px;width:11.7px;height:101.5px;background:linear-gradient(90deg,#a9b4d6 0,#bac4e2 25%,#b4bede 55%,#8a93b4 85%,#7c84a4 100%);border-bottom:2px solid #a4b2ea;box-sizing:border-box;"></div><span class="t" style="left:925.9px;top:375.8px;height:12px;line-height:12px;font-size:8.5px;color:#16162a;">30</span><span class="t" style="left:925.9px;top:409.3px;height:12px;line-height:12px;font-size:8.5px;color:#16162a;">20</span><span class="t" style="left:925.9px;top:443.5px;height:12px;line-height:12px;font-size:8.5px;color:#16162a;">10</span><span class="t" style="left:930.7px;top:476.3px;height:12px;line-height:12px;font-size:8.5px;color:#16162a;">0</span><div style="left:937.1px;top:380.8px;width:4.5px;height:1px;background:#6c7478;"></div><div style="left:937.6px;top:387.55px;width:4px;height:1px;background:#8a9498;"></div><div style="left:937.6px;top:394.3px;width:4px;height:1px;background:#8a9498;"></div><div style="left:937.6px;top:401.05px;width:4px;height:1px;background:#6c7478;"></div><div style="left:937.6px;top:407.8px;width:4px;height:1px;background:#222;"></div><div style="left:937.1px;top:414.55px;width:4.5px;height:1px;background:#333;"></div><div style="left:937.6px;top:421.3px;width:4px;height:1px;background:#555;"></div><div style="left:937.6px;top:428.05px;width:4px;height:1px;background:#222;"></div><div style="left:937.6px;top:434.8px;width:4px;height:1px;background:#555;"></div><div style="left:937.6px;top:441.55px;width:4px;height:1px;background:#222;"></div><div style="left:937.1px;top:448.3px;width:4.5px;height:1px;background:#8a9498;"></div><div style="left:937.6px;top:455.05px;width:4px;height:1px;background:#333;"></div><div style="left:937.6px;top:461.8px;width:4px;height:1px;background:#555;"></div><div style="left:937.6px;top:468.55px;width:4px;height:1px;background:#333;"></div><div style="left:937.6px;top:475.3px;width:4px;height:1px;background:#6c7478;"></div><div style="left:937.1px;top:482.05px;width:4.5px;height:1px;background:#222;"></div><span class="t" style="left:986.0px;top:382.0px;height:13px;line-height:13px;font-size:9.5px;color:#15153a;letter-spacing:0.17px;">IC heating(℃)</span><div class="inp" style="left:985.5px;top:397.3px;width:61.5px;height:16.5px;"></div><span class="t" style="left:988.2px;top:399.4px;height:13px;line-height:13px;font-size:9px;color:#222;">51</span><span class="t" style="left:1071.0px;top:382.0px;height:13px;line-height:13px;font-size:9.5px;color:#15153a;letter-spacing:0.19px;">Airflow Vol.(ml/min)</span><div class="inp lt" style="left:1070.5px;top:397.3px;width:61px;height:16.5px;"></div><span class="t" style="left:1073.2px;top:399.4px;height:13px;line-height:13px;font-size:9px;color:#222;">188</span><span class="t" style="left:985.5px;top:443.0px;height:13px;line-height:13px;font-size:9.5px;color:#15153a;letter-spacing:0.25px;">IC cooling(℃)</span><div class="inp" style="left:985.5px;top:458.3px;width:61.5px;height:17px;"></div><span class="t" style="left:988.2px;top:460.7px;height:13px;line-height:13px;font-size:9px;color:#222;">5</span><span class="t" style="left:1070.5px;top:443.0px;height:13px;line-height:13px;font-size:9.5px;color:#15153a;letter-spacing:0.18px;">Detector temp(℃)</span><div class="inp lt" style="left:1070.5px;top:458.3px;width:61px;height:17px;"></div><span class="t" style="left:1073.2px;top:460.7px;height:13px;line-height:13px;font-size:9px;color:#222;">45</span><div class="etch" style="left:860.5px;top:492.7px;width:319px;height:131.3px;"></div><div class="btn sm" style="left:874px;top:532.5px;width:50.5px;height:46.5px;"></div><span class="t" style="left:887.8px;top:548.5px;height:13px;line-height:13px;font-size:9.5px;color:#111;letter-spacing:-0.36px;">Clean</span><div class="a cframe g" style="left:937px;top:500.5px;width:183.3px;height:84.7px;"></div><svg class="a" style="left:937px;top:500.5px" width="183.3" height="84.7" viewBox="0 0 183.3 84.7"><path d="M29.83 47.56L31.98 45.66L44.38 60.06L42.67 61.57Z" fill="rgb(2, 238, 0)"/><path d="M31.56 46.02L33.75 44.17L45.79 58.87L44.04 60.35Z" fill="rgb(6, 239, 0)"/><path d="M33.32 44.53L35.55 42.73L47.23 57.72L45.45 59.15Z" fill="rgb(11, 239, 0)"/><path d="M35.11 43.07L37.39 41.33L48.69 56.61L46.88 57.99Z" fill="rgb(15, 240, 0)"/><path d="M36.95 41.66L39.27 39.98L50.19 55.53L48.34 56.87Z" fill="rgb(20, 241, 0)"/><path d="M38.82 40.30L41.18 38.68L51.71 54.49L49.83 55.79Z" fill="rgb(24, 241, 0)"/><path d="M40.72 38.98L43.12 37.42L53.25 53.49L51.34 54.74Z" fill="rgb(28, 242, 0)"/><path d="M42.65 37.72L45.09 36.21L54.82 52.53L52.88 53.73Z" fill="rgb(33, 243, 0)"/><path d="M44.61 36.50L47.09 35.05L56.42 51.60L54.44 52.75Z" fill="rgb(37, 243, 0)"/><path d="M46.60 35.32L49.11 33.94L58.03 50.72L56.03 51.82Z" fill="rgb(42, 244, 0)"/><path d="M48.62 34.20L51.17 32.88L59.67 49.87L57.64 50.92Z" fill="rgb(46, 245, 0)"/><path d="M50.67 33.13L53.25 31.87L61.33 49.07L59.27 50.07Z" fill="rgb(51, 245, 0)"/><path d="M52.75 32.11L55.35 30.91L63.00 48.31L60.93 49.26Z" fill="rgb(55, 246, 0)"/><path d="M54.85 31.14L57.48 30.01L64.70 47.59L62.60 48.49Z" fill="rgb(60, 247, 0)"/><path d="M56.97 30.22L59.63 29.16L66.41 46.91L64.29 47.75Z" fill="rgb(64, 247, 0)"/><path d="M59.11 29.36L61.80 28.36L68.14 46.27L66.00 47.07Z" fill="rgb(68, 248, 0)"/><path d="M61.28 28.55L63.99 27.61L69.88 45.68L67.72 46.42Z" fill="rgb(73, 249, 0)"/><path d="M63.46 27.79L66.19 26.92L71.64 45.13L69.46 45.82Z" fill="rgb(77, 249, 0)"/><path d="M65.66 27.09L68.42 26.29L73.41 44.62L71.22 45.26Z" fill="rgb(87, 250, 0)"/><path d="M67.88 26.44L70.65 25.71L75.20 44.16L72.99 44.74Z" fill="rgb(101, 250, 0)"/><path d="M70.12 25.84L72.91 25.18L76.99 43.74L74.77 44.27Z" fill="rgb(116, 251, 0)"/><path d="M72.36 25.31L75.17 24.72L78.79 43.37L76.56 43.84Z" fill="rgb(131, 251, 0)"/><path d="M74.63 24.82L77.44 24.30L80.61 43.04L78.36 43.45Z" fill="rgb(145, 251, 0)"/><path d="M76.90 24.40L79.73 23.95L82.43 42.75L80.17 43.11Z" fill="rgb(160, 252, 0)"/><path d="M79.18 24.03L82.02 23.65L84.25 42.52L81.99 42.82Z" fill="rgb(174, 252, 0)"/><path d="M81.47 23.71L84.32 23.40L86.08 42.32L83.81 42.57Z" fill="rgb(189, 253, 0)"/><path d="M83.77 23.46L86.62 23.22L87.92 42.17L85.64 42.36Z" fill="rgb(203, 253, 0)"/><path d="M86.07 23.26L88.93 23.09L89.76 42.07L87.48 42.20Z" fill="rgb(218, 253, 0)"/><path d="M88.38 23.11L91.24 23.02L91.60 42.01L89.32 42.09Z" fill="rgb(233, 254, 0)"/><path d="M90.69 23.03L93.55 23.00L93.44 42.00L91.16 42.02Z" fill="rgb(247, 254, 0)"/><path d="M93.00 23.00L95.87 23.04L95.28 42.04L93.00 42.00Z" fill="rgb(255, 249, 0)"/><path d="M95.31 23.03L98.18 23.14L97.12 42.11L94.84 42.02Z" fill="rgb(255, 237, 0)"/><path d="M97.62 23.11L100.48 23.30L98.96 42.24L96.68 42.09Z" fill="rgb(255, 226, 0)"/><path d="M99.93 23.26L102.78 23.51L100.80 42.41L98.52 42.20Z" fill="rgb(255, 214, 0)"/><path d="M102.23 23.46L105.08 23.78L102.63 42.62L100.36 42.36Z" fill="rgb(255, 202, 0)"/><path d="M104.53 23.71L107.37 24.11L104.45 42.88L102.19 42.57Z" fill="rgb(255, 191, 0)"/><path d="M106.82 24.03L109.65 24.49L106.27 43.19L104.01 42.82Z" fill="rgb(255, 179, 0)"/><path d="M109.10 24.40L111.92 24.93L108.07 43.54L105.83 43.11Z" fill="rgb(255, 168, 0)"/><path d="M111.37 24.82L114.18 25.43L109.87 43.94L107.64 43.45Z" fill="rgb(255, 156, 0)"/><path d="M113.64 25.31L116.42 25.98L111.66 44.38L109.44 43.84Z" fill="rgb(255, 145, 0)"/><path d="M115.88 25.84L118.65 26.59L113.44 44.86L111.23 44.27Z" fill="rgb(255, 133, 0)"/><path d="M118.12 26.44L120.87 27.25L115.20 45.39L113.01 44.74Z" fill="rgb(255, 120, 0)"/><path d="M120.34 27.09L123.06 27.97L116.96 45.96L114.78 45.26Z" fill="rgb(255, 105, 0)"/><path d="M122.54 27.79L125.24 28.74L118.69 46.57L116.54 45.82Z" fill="rgb(255, 91, 0)"/><path d="M124.72 28.55L127.40 29.56L120.41 47.23L118.28 46.42Z" fill="rgb(255, 77, 0)"/><path d="M126.89 29.36L129.54 30.44L122.12 47.93L120.00 47.07Z" fill="rgb(255, 62, 0)"/><path d="M129.03 30.22L131.66 31.37L123.80 48.67L121.71 47.75Z" fill="rgb(255, 48, 0)"/><path d="M131.15 31.14L133.75 32.35L125.47 49.45L123.40 48.49Z" fill="rgb(255, 34, 0)"/><path d="M133.25 32.11L135.82 33.38L127.12 50.27L125.07 49.26Z" fill="rgb(255, 19, 0)"/><path d="M135.33 33.13L137.86 34.47L128.75 51.14L126.73 50.07Z" fill="rgb(255, 9, 0)"/><path d="M137.38 34.20L139.88 35.60L130.35 52.04L128.36 50.92Z" fill="rgb(255, 8, 0)"/><path d="M139.40 35.32L141.86 36.78L131.93 52.98L129.97 51.82Z" fill="rgb(255, 7, 0)"/><path d="M141.39 36.50L143.82 38.02L133.49 53.96L131.56 52.75Z" fill="rgb(255, 6, 0)"/><path d="M143.35 37.72L145.74 39.30L135.03 54.99L133.12 53.73Z" fill="rgb(255, 6, 0)"/><path d="M145.28 38.98L147.64 40.62L136.53 56.04L134.66 54.74Z" fill="rgb(255, 5, 0)"/><path d="M147.18 40.30L149.50 42.00L138.02 57.14L136.17 55.79Z" fill="rgb(255, 4, 0)"/><path d="M149.05 41.66L151.32 43.42L139.47 58.27L137.66 56.87Z" fill="rgb(255, 3, 0)"/><path d="M150.89 43.07L153.11 44.88L140.89 59.44L139.12 57.99Z" fill="rgb(255, 2, 0)"/><path d="M152.68 44.53L154.86 46.39L142.29 60.64L140.55 59.15Z" fill="rgb(255, 1, 0)"/><path d="M154.44 46.02L156.58 47.94L143.66 61.87L141.96 60.35Z" fill="rgb(255, 0, 0)"/><path d="M29.5 47.2L27.1 44.6" stroke="#222" stroke-width="1"/><path d="M52.5 31.7L51.0 28.5" stroke="#222" stroke-width="1"/><path d="M79.1 23.5L78.6 20.1" stroke="#222" stroke-width="1"/><path d="M106.9 23.5L107.4 20.1" stroke="#222" stroke-width="1"/><path d="M133.5 31.7L135.0 28.5" stroke="#222" stroke-width="1"/><path d="M156.5 47.2L158.9 44.6" stroke="#222" stroke-width="1"/><defs><linearGradient id="ga805" x1="0" x2="1"><stop offset="0" stop-color="#ffffff"/><stop offset=".45" stop-color="#e6e6e6"/><stop offset=".7" stop-color="#cfcfcf"/><stop offset="1" stop-color="#a8a8a8"/></linearGradient></defs><path d="M46.7 79.7A68.4 68.4 0 0 1 137.4 78.9" stroke="url(#ga805)" stroke-width="1.7" fill="none"/><path d="M113.3 65.2L120.8 68.9L128.5 48.7L124.4 46.7Z" fill="#ff0000"/></svg><span class="t" style="left:958.5px;top:532.5px;height:13px;line-height:13px;font-size:9px;color:#16162a;">0</span><span class="t" style="left:977.5px;top:513.5px;height:13px;line-height:13px;font-size:9px;color:#16162a;">200</span><span class="t" style="left:1006.5px;top:506.0px;height:13px;line-height:13px;font-size:9px;color:#16162a;">400</span><span class="t" style="left:1036.0px;top:506.0px;height:13px;line-height:13px;font-size:9px;color:#16162a;">600</span><span class="t" style="left:1065.0px;top:513.5px;height:13px;line-height:13px;font-size:9px;color:#16162a;">800</span><span class="t" style="left:1091.0px;top:528.5px;height:13px;line-height:13px;font-size:9px;color:#16162a;">1000</span><span class="t" style="left:939.0px;top:590.2px;height:13px;line-height:13px;font-size:9.5px;color:#15153a;letter-spacing:0.17px;">Reactor temp(℃)</span><div class="a" style="left:1082.3px;top:589.2px;width:37.5px;height:16.6px;background:#fff;border:1px solid #c9d3da;box-sizing:border-box"></div><span class="t" style="left:1085.0px;top:591.0px;height:13px;line-height:13px;font-size:9px;color:#222;">805</span><span class="t" style="left:1140.0px;top:516.5px;height:13px;line-height:13px;font-size:9.5px;color:#15153a;letter-spacing:-0.15px;">Blow</span><div class="a" style="left:1143.2px;top:532.5px;width:11.6px;height:46.5px;border-radius:50%;background:linear-gradient(180deg,#6c7189 0,#8d93a8 22%,#c9ccd2 45%,#d9dadc 70%,#a9abb2 100%);box-shadow:0 0 0 1px rgba(120,130,140,.55);"></div><div class="a" style="left:1145px;top:548px;width:8px;height:29.5px;border-radius:50%;background:linear-gradient(90deg,#b4b6bc,#e6e6e8 50%,#b9bbc0);"></div><div class="etch" style="left:860.5px;top:623.6px;width:319px;height:65.4px;"></div><div class="a sbtn" style="left:874.5px;top:634px;width:91.5px;height:44.6px;"></div><svg class="a" style="left:883px;top:651px" width="11" height="13" viewBox="0 0 11 13"><path d="M1 1 L9.5 6.5 L1 12Z" fill="#e9e9e9" stroke="#777" stroke-width="1"/></svg><span class="t" style="left:923.5px;top:643.5px;height:13px;line-height:13px;font-size:9.5px;color:#15152a;letter-spacing:-0.21px;">Start</span><span class="t" style="left:921.0px;top:657.5px;height:13px;line-height:13px;font-size:9.5px;color:#15152a;letter-spacing:0.04px;">Integ.</span><span class="t" style="left:986.8px;top:631.8px;height:14px;line-height:14px;font-size:10px;color:#15153a;letter-spacing:-0.22px;">OK</span><div class="a" style="left:985.6px;top:647.6px;width:18.4px;height:22.4px;border-radius:50%;background:radial-gradient(ellipse at 50% 50%,#00671f 0,#006420 80%,#0a6a2a 100%);box-shadow:1px 1.2px 1.2px #7d8f90,-0.6px -0.6px 1px #d6e6ea;"></div><div class="btn sm" style="left:1021.3px;top:641.4px;width:68.7px;height:32.2px;"></div><span class="t" style="left:1033.1px;top:650.2px;height:13px;line-height:13px;font-size:9.5px;color:#111;letter-spacing:0.06px;">Inlet pump</span><div class="btn sm" style="left:1098.3px;top:641.4px;width:68.3px;height:32.2px;"></div><span class="t" style="left:1106.0px;top:650.2px;height:13px;line-height:13px;font-size:9.5px;color:#111;letter-spacing:0.11px;">Outlet pump</span></div>
<div class="win" style="left:1256.3px;transform:scale(0.9403,0.9975);"><div style="left:0px;top:0px;width:1180px;height:696px;background:#aecad6;"></div><div style="left:0px;top:0px;width:1181px;height:20px;background:#668cd6;"></div><svg class="a" style="left:4.3px;top:3px" width="9" height="13" viewBox="0 0 9 13"><path d="M3.6 0.3 h1.8 v2.4 c1.6 0.8 2.6 2 2.6 3.6 v5.2 a0.9 0.9 0 0 1 -0.9 0.9 h-5.2 a0.9 0.9 0 0 1 -0.9 -0.9 v-5.2 c0 -1.6 1 -2.8 2.6 -3.6z" fill="#eaf6ff"/><path d="M1.6 7 h5.8 v4.4 h-5.8z" fill="#c4e6ff"/><path d="M3.6 0.3 h1.8 v1.6 h-1.8z" fill="#7fc4ff"/></svg><span class="t" style="left:566.0px;top:2.5px;height:15px;line-height:15px;font-size:11px;color:#1e2432;letter-spacing:0.07px;">TOC2000</span><div style="left:1114.1px;top:8.5px;width:7px;height:2px;background:#1b1b2a;"></div><div style="left:1133.1px;top:6px;width:6px;height:6px;border:1px solid #1b1b2a;border-top-width:2px;box-sizing:border-box;"></div><div style="left:1135.1px;top:4px;width:6px;height:6px;border:1px solid #1b1b2a;border-left:none;border-bottom:none;box-sizing:border-box;"></div><div style="left:1146.6px;top:0px;width:38.5px;height:15.3px;background:#c84f4f;"></div><span class="t" style="left:1161.4px;top:-0.5px;height:15px;line-height:15px;font-size:11px;color:#fff;font-weight:bold;">×</span><div style="left:1px;top:20px;width:1178px;height:17.5px;background:linear-gradient(180deg,#f0f0f0 0,#f0f0f0 15px,#d2d5d6 17px,#c0ccd0 17.5px);"></div><span class="t" style="left:9.0px;top:21.5px;height:13px;line-height:13px;font-size:9px;color:#1a1a30;letter-spacing:-0.36px;">File(F)</span><span class="t" style="left:45.0px;top:21.5px;height:13px;line-height:13px;font-size:9px;color:#1a1a30;letter-spacing:0.35px;">Measure(M)</span><span class="t" style="left:108.5px;top:21.5px;height:13px;line-height:13px;font-size:9px;color:#1a1a30;letter-spacing:0.17px;">Record(R)</span><span class="t" style="left:162.5px;top:21.5px;height:13px;line-height:13px;font-size:9px;color:#1a1a30;letter-spacing:0.21px;">Tool(T)</span><span class="t" style="left:203.5px;top:21.5px;height:13px;line-height:13px;font-size:9px;color:#1a1a30;letter-spacing:0.29px;">Help(H)</span><div style="left:0px;top:20px;width:1.6px;height:676px;background:#4f78cc;"></div><div style="left:115px;top:37px;width:1px;height:659px;background:#6f7f88;"></div><div style="left:116px;top:37px;width:1px;height:659px;background:#c9dde6;"></div><div class="btn big" style="left:10.3px;top:63.6px;width:93px;height:47.2px;"></div><span class="t" style="left:35.1px;top:79.8px;height:18px;line-height:18px;font-size:13px;color:#111;">Method</span><div class="btn big" style="left:10.3px;top:145px;width:93px;height:47.2px;"></div><span class="t" style="left:34.8px;top:161.2px;height:18px;line-height:18px;font-size:13px;color:#111;">Std test</span><div class="btn big act" style="left:10.3px;top:227px;width:93px;height:47.2px;"></div><span class="t" style="left:31.2px;top:243.2px;height:18px;line-height:18px;font-size:13px;color:#111;">Sam test</span><div class="btn big" style="left:10.3px;top:309.5px;width:93px;height:47.2px;"></div><span class="t" style="left:32.6px;top:325.7px;height:18px;line-height:18px;font-size:13px;color:#111;">Std data</span><div class="btn big" style="left:10.3px;top:391.3px;width:93px;height:47.2px;"></div><span class="t" style="left:29.0px;top:407.5px;height:18px;line-height:18px;font-size:13px;color:#111;">Sam data</span><div class="btn big" style="left:10.3px;top:472.8px;width:93px;height:47.2px;"></div><span class="t" style="left:32.9px;top:489.0px;height:18px;line-height:18px;font-size:13px;color:#111;">Standby</span><div class="btn big" style="left:10.3px;top:555.4px;width:93px;height:47.2px;"></div><span class="t" style="left:46.0px;top:571.6px;height:18px;line-height:18px;font-size:13px;color:#111;">Exit</span><span class="t" style="left:36.0px;top:644.5px;height:18px;line-height:18px;font-size:12.5px;color:#223;letter-spacing:0.45px;">COM</span><div class="a" style="left:79.3px;top:642.8px;width:20.5px;height:26.5px;border-radius:50%;background:radial-gradient(ellipse at 50% 50%,#4aff12 0,#45f812 80%,#52e030 100%);box-shadow:1px 1.2px 1.2px #7d8f90,-0.6px -0.6px 1px #d6e6ea;"></div><span class="t" style="left:154.0px;top:52.0px;height:14px;line-height:14px;font-size:10px;color:#111;letter-spacing:0.09px;">Methods</span><div class="inp lg" style="left:202px;top:49px;width:267px;height:26px;"></div><span class="t" style="left:208.0px;top:50.6px;height:13px;line-height:13px;font-size:9px;color:#222;">NPOC</span><span class="t" style="left:501.0px;top:52.0px;height:14px;line-height:14px;font-size:10px;color:#111;letter-spacing:-0.32px;">Document</span><div class="inp lg" style="left:555px;top:49px;width:266px;height:26px;"></div><div class="a tab" style="left:189px;top:87px;width:84px;height:20px;"></div><span class="t" style="left:196.0px;top:90.0px;height:13px;line-height:13px;font-size:9.5px;color:#1a1a2a;letter-spacing:-0.02px;">Measuring curve</span><div class="a tab" style="left:274px;top:87px;width:95px;height:20px;"></div><span class="t" style="left:281.0px;top:90.0px;height:13px;line-height:13px;font-size:9.5px;color:#1a1a2a;letter-spacing:-0.02px;">Parameter Settings</span><div class="a tpanel" style="left:121px;top:107px;width:733px;height:477px;"></div><div class="a tab on" style="left:122px;top:86px;width:65px;height:23px;"></div><span class="t" style="left:129.0px;top:89.4px;height:13px;line-height:13px;font-size:9.5px;color:#1a1a2a;letter-spacing:0.08px;">Sample test</span><div style="left:127px;top:115px;width:721px;height:229px;background:#fff;"></div><div style="left:127px;top:133px;width:710px;height:15.5px;background:#7088f8;"></div><div style="left:127px;top:148.1px;width:710px;height:1px;background:#333;"></div><div style="left:127px;top:164.5px;width:710px;height:1px;background:#333;"></div><div style="left:127px;top:196.9px;width:710px;height:1.2px;background:#1a1a1a;"></div><div style="left:127px;top:213.2px;width:710px;height:1px;background:#333;"></div><div style="left:127px;top:229.5px;width:710px;height:1px;background:#8c8c8c;"></div><div style="left:127px;top:245.4px;width:710px;height:1.2px;background:#1a1a1a;"></div><div style="left:127px;top:261.8px;width:710px;height:1px;background:#8c8c8c;"></div><div style="left:127px;top:278.5px;width:710px;height:1px;background:#b5b5b5;"></div><div style="left:127px;top:293.7px;width:710px;height:1.2px;background:#1a1a1a;"></div><div style="left:127px;top:310px;width:710px;height:1px;background:#8c8c8c;"></div><div style="left:127px;top:327.5px;width:710px;height:1px;background:#333;"></div><div style="left:144.4px;top:115px;width:1.1px;height:213px;background:#202020;"></div><div style="left:238.4px;top:115px;width:1.3px;height:213px;background:#202020;"></div><div style="left:285.4px;top:115px;width:1px;height:213px;background:#202020;"></div><div style="left:331.4px;top:115px;width:1px;height:213px;background:#202020;"></div><div style="left:565.4px;top:115px;width:1.1px;height:213px;background:#202020;"></div><div style="left:631.4px;top:115px;width:1.1px;height:213px;background:#202020;"></div><div style="left:764.4px;top:115px;width:1.1px;height:213px;background:#202020;"></div><div style="left:837px;top:115px;width:11px;height:213px;background:#f0f0f0;"></div><span class="t" style="left:839.9px;top:117.5px;height:13px;line-height:13px;font-size:9px;color:#555;">˄</span><span class="t" style="left:839.9px;top:316.5px;height:13px;line-height:13px;font-size:9px;color:#555;">˅</span><div style="left:127px;top:328.5px;width:721px;height:16px;background:#f0f0f0;"></div><div style="left:141px;top:330px;width:455.5px;height:13px;background:#cdcdcd;"></div><span class="t" style="left:131.3px;top:329.0px;height:14px;line-height:14px;font-size:10px;color:#444;">‹</span><span class="t" style="left:829.3px;top:329.0px;height:14px;line-height:14px;font-size:10px;color:#444;">›</span><span class="t" style="left:150.0px;top:117.5px;height:13px;line-height:13px;font-size:9px;color:#1a1030;">No.</span><span class="t" style="left:176.0px;top:117.5px;height:13px;line-height:13px;font-size:9px;color:#1a1030;">Name</span><span class="t" style="left:243.0px;top:117.5px;height:13px;line-height:13px;font-size:9px;color:#1a1030;">Size</span><span class="t" style="left:290.0px;top:117.5px;height:13px;line-height:13px;font-size:9px;color:#1a1030;">I- Times</span><span class="t" style="left:337.0px;top:117.5px;height:13px;line-height:13px;font-size:9px;color:#1a1030;">NPOC-Measured</span><span class="t" style="left:415.0px;top:117.5px;height:13px;line-height:13px;font-size:9px;color:#1a1030;">NPOC-Test time</span><span class="t" style="left:487.0px;top:117.5px;height:13px;line-height:13px;font-size:9px;color:#1a1030;">NPOC-Conc.</span><span class="t" style="left:571.0px;top:117.5px;height:13px;line-height:13px;font-size:9px;color:#1a1030;">NPOC-Integ.</span><span class="t" style="left:636.0px;top:117.5px;height:13px;line-height:13px;font-size:9px;color:#1a1030;">NPOC-RSD</span><span class="t" style="left:131.0px;top:355.5px;height:13px;line-height:13px;font-size:9.5px;color:#151530;">Sample data collect</span><div class="a cframe" style="left:127px;top:367px;width:721px;height:204.5px;"></div><svg class="a" style="left:172px;top:376px" width="661" height="160" viewBox="0 0 661 160"><rect width="661" height="160" fill="#000"/><path d="M9.18 0V160M45.90 0V160M247.88 0V160M266.24 0V160M468.21 0V160M486.57 0V160M0 66.67H661" stroke="#001800" stroke-width="1" fill="none"/><path d="M55.08 0V160M165.25 0V160M201.97 0V160M229.51 0V160M275.42 0V160M284.60 0V160M376.40 0V160M413.12 0V160M422.31 0V160M431.49 0V160M449.85 0V160M459.03 0V160M504.93 0V160M541.65 0V160M578.38 0V160M596.74 0V160M615.10 0V160M651.82 0V160M0 146.67H661M0 126.67H661M0 86.67H661M0 53.33H661M0 40.00H661" stroke="#002800" stroke-width="1" fill="none"/><path d="M0.00 0V160M27.54 0V160M82.62 0V160M91.81 0V160M128.53 0V160M137.71 0V160M156.07 0V160M174.43 0V160M192.79 0V160M211.15 0V160M220.33 0V160M238.69 0V160M302.96 0V160M312.14 0V160M330.50 0V160M339.68 0V160M348.86 0V160M358.04 0V160M385.58 0V160M394.76 0V160M440.67 0V160M523.29 0V160M532.47 0V160M560.01 0V160M587.56 0V160M633.46 0V160M642.64 0V160M0 160.00H661M0 100.00H661M0 93.33H661M0 73.33H661M0 60.00H661M0 46.67H661M0 33.33H661M0 20.00H661M0 13.33H661M0 6.67H661M0 -0.00H661" stroke="#003a00" stroke-width="1" fill="none"/><path d="M18.36 0V160M36.72 0V160M64.26 0V160M100.99 0V160M110.17 0V160M119.35 0V160M293.78 0V160M321.32 0V160M495.75 0V160M569.19 0V160M605.92 0V160M624.28 0V160M0 153.33H661M0 140.00H661M0 133.33H661M0 113.33H661M0 106.67H661M0 26.67H661" stroke="#004c00" stroke-width="1" fill="none"/><path d="M146.89 0V160M183.61 0V160M477.39 0V160M661.00 0V160" stroke="#006600" stroke-width="1" fill="none"/><path d="M73.44 0V160M257.06 0V160M367.22 0V160M403.94 0V160M514.11 0V160M550.83 0V160M0 120.00H661M0 80.00H661" stroke="#008200" stroke-width="1" fill="none"/></svg><span class="t" style="left:161.7px;top:370.5px;height:12px;line-height:12px;font-size:8.6px;color:#16162a;">1</span><div style="left:168px;top:375.5px;width:4px;height:1px;background:#222;"></div><span class="t" style="left:149.8px;top:390.5px;height:12px;line-height:12px;font-size:8.6px;color:#16162a;">0.75</span><span class="t" style="left:154.5px;top:410.5px;height:12px;line-height:12px;font-size:8.6px;color:#16162a;">0.5</span><div style="left:168px;top:415.5px;width:4px;height:1px;background:#222;"></div><span class="t" style="left:149.8px;top:430.5px;height:12px;line-height:12px;font-size:8.6px;color:#16162a;">0.25</span><span class="t" style="left:161.7px;top:450.5px;height:12px;line-height:12px;font-size:8.6px;color:#16162a;">0</span><div style="left:168px;top:455.5px;width:4px;height:1px;background:#222;"></div><span class="t" style="left:146.9px;top:470.5px;height:12px;line-height:12px;font-size:8.6px;color:#16162a;">-0.25</span><span class="t" style="left:151.7px;top:490.5px;height:12px;line-height:12px;font-size:8.6px;color:#16162a;">-0.5</span><div style="left:168px;top:495.5px;width:4px;height:1px;background:#222;"></div><span class="t" style="left:146.9px;top:510.5px;height:12px;line-height:12px;font-size:8.6px;color:#16162a;">-0.75</span><span class="t" style="left:158.9px;top:530.5px;height:12px;line-height:12px;font-size:8.6px;color:#16162a;">-1</span><div style="left:168px;top:535.5px;width:4px;height:1px;background:#222;"></div><div style="left:171.5px;top:536px;width:1px;height:4px;background:#222;"></div><span class="t" style="left:169.6px;top:542.0px;height:12px;line-height:12px;font-size:8.6px;color:#16162a;">0</span><div style="left:208.222px;top:536px;width:1px;height:4px;background:#222;"></div><span class="t" style="left:203.9px;top:542.0px;height:12px;line-height:12px;font-size:8.6px;color:#16162a;">20</span><div style="left:244.944px;top:536px;width:1px;height:4px;background:#222;"></div><span class="t" style="left:240.7px;top:542.0px;height:12px;line-height:12px;font-size:8.6px;color:#16162a;">40</span><div style="left:281.667px;top:536px;width:1px;height:4px;background:#222;"></div><span class="t" style="left:277.4px;top:542.0px;height:12px;line-height:12px;font-size:8.6px;color:#16162a;">60</span><div style="left:318.389px;top:536px;width:1px;height:4px;background:#222;"></div><span class="t" style="left:314.1px;top:542.0px;height:12px;line-height:12px;font-size:8.6px;color:#16162a;">80</span><div style="left:355.111px;top:536px;width:1px;height:4px;background:#222;"></div><span class="t" style="left:348.4px;top:542.0px;height:12px;line-height:12px;font-size:8.6px;color:#16162a;">100</span><div style="left:391.833px;top:536px;width:1px;height:4px;background:#222;"></div><span class="t" style="left:385.2px;top:542.0px;height:12px;line-height:12px;font-size:8.6px;color:#16162a;">120</span><div style="left:428.556px;top:536px;width:1px;height:4px;background:#222;"></div><span class="t" style="left:421.9px;top:542.0px;height:12px;line-height:12px;font-size:8.6px;color:#16162a;">140</span><div style="left:465.278px;top:536px;width:1px;height:4px;background:#222;"></div><span class="t" style="left:458.6px;top:542.0px;height:12px;line-height:12px;font-size:8.6px;color:#16162a;">160</span><div style="left:502px;top:536px;width:1px;height:4px;background:#222;"></div><span class="t" style="left:495.3px;top:542.0px;height:12px;line-height:12px;font-size:8.6px;color:#16162a;">180</span><div style="left:538.722px;top:536px;width:1px;height:4px;background:#222;"></div><span class="t" style="left:532.0px;top:542.0px;height:12px;line-height:12px;font-size:8.6px;color:#16162a;">200</span><div style="left:575.444px;top:536px;width:1px;height:4px;background:#222;"></div><span class="t" style="left:568.8px;top:542.0px;height:12px;line-height:12px;font-size:8.6px;color:#16162a;">220</span><div style="left:612.167px;top:536px;width:1px;height:4px;background:#222;"></div><span class="t" style="left:605.5px;top:542.0px;height:12px;line-height:12px;font-size:8.6px;color:#16162a;">240</span><div style="left:648.889px;top:536px;width:1px;height:4px;background:#222;"></div><span class="t" style="left:642.2px;top:542.0px;height:12px;line-height:12px;font-size:8.6px;color:#16162a;">260</span><div style="left:685.611px;top:536px;width:1px;height:4px;background:#222;"></div><span class="t" style="left:678.9px;top:542.0px;height:12px;line-height:12px;font-size:8.6px;color:#16162a;">280</span><div style="left:722.333px;top:536px;width:1px;height:4px;background:#222;"></div><span class="t" style="left:715.7px;top:542.0px;height:12px;line-height:12px;font-size:8.6px;color:#16162a;">300</span><div style="left:759.056px;top:536px;width:1px;height:4px;background:#222;"></div><span class="t" style="left:752.4px;top:542.0px;height:12px;line-height:12px;font-size:8.6px;color:#16162a;">320</span><div style="left:795.778px;top:536px;width:1px;height:4px;background:#222;"></div><span class="t" style="left:789.1px;top:542.0px;height:12px;line-height:12px;font-size:8.6px;color:#16162a;">340</span><div style="left:832.5px;top:536px;width:1px;height:4px;background:#222;"></div><span class="t" style="left:825.8px;top:542.0px;height:12px;line-height:12px;font-size:8.6px;color:#16162a;">360</span><span class="t" style="left:487.5px;top:558.0px;height:13px;line-height:13px;font-size:9px;color:#16162a;letter-spacing:-0.08px;">Time (s)</span><span class="t" style="left:136.5px;top:453px;height:0;width:0;overflow:visible;transform:rotate(-90deg);transform-origin:0 0;"><span style="position:absolute;left:-23.5px;top:-6.5px;height:13px;line-height:13px;font-size:10.5px;color:#16162a;letter-spacing:0.03px;white-space:nowrap">Amplitude</span></span><div class="a etch2" style="left:122px;top:589.5px;width:733.3px;height:98.5px;"></div><span class="t" style="left:290.0px;top:609.0px;height:13px;line-height:13px;font-size:9.5px;color:#15153a;letter-spacing:-0.18px;">Baseline</span><div class="inp md" style="left:336px;top:606px;width:59.3px;height:17px;"></div><span class="t" style="left:338.7px;top:608.4px;height:13px;line-height:13px;font-size:9px;color:#222;">55929.988</span><span class="t" style="left:519.0px;top:609.0px;height:13px;line-height:13px;font-size:9.5px;color:#15153a;letter-spacing:0.04px;">Integ. results</span><div class="inp md" style="left:584px;top:606px;width:60.3px;height:17px;"></div><span class="t" style="left:586.7px;top:608.4px;height:13px;line-height:13px;font-size:9px;color:#222;">0</span><div class="btn sm" style="left:135.7px;top:641.3px;width:102.3px;height:32.2px;"></div><span class="t" style="left:167.8px;top:650.1px;height:13px;line-height:13px;font-size:9.5px;color:#111;letter-spacing:0.13px;">New test</span><div class="btn sm" style="left:256.2px;top:641.3px;width:102.3px;height:32.2px;"></div><span class="t" style="left:284.8px;top:650.1px;height:13px;line-height:13px;font-size:9.5px;color:#111;letter-spacing:0.13px;">Load Data</span><div class="btn sm" style="left:376.7px;top:641.3px;width:102.3px;height:32.2px;"></div><span class="t" style="left:403.3px;top:650.1px;height:13px;line-height:13px;font-size:9.5px;color:#111;letter-spacing:-0.01px;">Parameters</span><div class="btn sm" style="left:497.5px;top:641.3px;width:102.3px;height:32.2px;"></div><span class="t" style="left:527.1px;top:650.1px;height:13px;line-height:13px;font-size:9.5px;color:#111;letter-spacing:0.02px;">Save data</span><div class="btn sm" style="left:618.5px;top:641.3px;width:102.3px;height:32.2px;"></div><span class="t" style="left:645.6px;top:650.1px;height:13px;line-height:13px;font-size:9.5px;color:#111;letter-spacing:0.28px;">Test report</span><div class="btn sm" style="left:739.5px;top:641.3px;width:102.3px;height:32.2px;"></div><span class="t" style="left:778.6px;top:650.1px;height:13px;line-height:13px;font-size:9.5px;color:#111;letter-spacing:-0.06px;">Close</span><div class="a tpanel r" style="left:860px;top:78px;width:319.5px;height:276.5px;"></div><div class="a tab on" style="left:861px;top:57px;width:41px;height:24px;"></div><span class="t" style="left:867.8px;top:59.8px;height:13px;line-height:13px;font-size:9.5px;color:#1a1a2a;">NPOC</span><div class="etch" style="left:864px;top:85px;width:309.5px;height:263px;"></div><div style="left:872.5px;top:92px;width:295px;height:187px;background:#fff;"></div><div style="left:872.5px;top:107.3px;width:282px;height:2.6px;background:#0c0c0c;"></div><div style="left:872.5px;top:124.8px;width:282px;height:1px;background:#666;"></div><div style="left:872.5px;top:141.3px;width:282px;height:1px;background:#c0c0c0;"></div><div style="left:872.5px;top:157px;width:282px;height:1.4px;background:#111;"></div><div style="left:872.5px;top:173.1px;width:282px;height:1px;background:#9a9a9a;"></div><div style="left:872.5px;top:189.9px;width:282px;height:1px;background:#9a9a9a;"></div><div style="left:872.5px;top:205.2px;width:282px;height:1.6px;background:#111;"></div><div style="left:872.5px;top:221.4px;width:282px;height:1px;background:#c4c4c4;"></div><div style="left:872.5px;top:238.7px;width:282px;height:1px;background:#888;"></div><div style="left:872.5px;top:253.9px;width:282px;height:1.4px;background:#111;"></div><div style="left:887px;top:92px;width:1.4px;height:173.5px;background:#111;"></div><div style="left:912.5px;top:92px;width:1.4px;height:173.5px;background:#111;"></div><div style="left:968.4px;top:92px;width:1.6px;height:173.5px;background:#111;"></div><div style="left:1024.9px;top:92px;width:1px;height:173.5px;background:#cfcfcf;"></div><div style="left:1104.75px;top:92px;width:1.1px;height:173.5px;background:#3c3c3c;"></div><div style="left:1154.5px;top:92px;width:13px;height:173.5px;background:#f0f0f0;"></div><span class="t" style="left:1158.4px;top:94.5px;height:13px;line-height:13px;font-size:9px;color:#555;">˄</span><span class="t" style="left:1158.4px;top:252.5px;height:13px;line-height:13px;font-size:9px;color:#555;">˅</span><div style="left:872.5px;top:265.5px;width:295px;height:13px;background:#f0f0f0;"></div><div style="left:886px;top:266.5px;width:218.5px;height:11px;background:#cdcdcd;"></div><span class="t" style="left:876.8px;top:264.0px;height:14px;line-height:14px;font-size:10px;color:#444;">‹</span><span class="t" style="left:1146.3px;top:264.0px;height:14px;line-height:14px;font-size:10px;color:#444;">›</span><span class="t" style="left:891.7px;top:92.5px;height:13px;line-height:13px;font-size:9px;color:#1a1030;">No.</span><span class="t" style="left:917.3px;top:92.5px;height:13px;line-height:13px;font-size:9px;color:#1a1030;">Integral</span><span class="t" style="left:974.3px;top:92.5px;height:13px;line-height:13px;font-size:9px;color:#1a1030;">Peak</span><span class="t" style="left:1029.3px;top:92.5px;height:13px;line-height:13px;font-size:9px;color:#1a1030;">Conc.</span><span class="t" style="left:1110.3px;top:92.5px;height:13px;line-height:13px;font-size:9px;color:#1a1030;">Time</span><span class="t" style="left:931.7px;top:295.5px;height:13px;line-height:13px;font-size:9.5px;color:#15153a;letter-spacing:0.19px;">Integral mean</span><div class="inp" style="left:931.7px;top:310.2px;width:62.3px;height:17.2px;"></div><span class="t" style="left:934.4px;top:312.7px;height:13px;line-height:13px;font-size:9px;color:#222;">0</span><span class="t" style="left:1045.0px;top:295.5px;height:13px;line-height:13px;font-size:9.5px;color:#15153a;letter-spacing:-0.88px;">RSD%</span><div class="inp" style="left:1045px;top:310.2px;width:61.7px;height:17.2px;"></div><span class="t" style="left:1047.7px;top:312.7px;height:13px;line-height:13px;font-size:9px;color:#222;">0</span><div class="etch" style="left:860.5px;top:354.3px;width:319px;height:136.2px;"></div><span class="t" style="left:932.0px;top:364.5px;height:13px;line-height:13px;font-size:9px;color:#15153a;letter-spacing:0.00px;">TIC(ml)</span><div style="left:940.6px;top:379.8px;width:13.7px;height:103.5px;background:#bad4dd;"></div><div style="left:941.6px;top:380.8px;width:11.7px;height:101.5px;background:linear-gradient(90deg,#a9b4d6 0,#bac4e2 25%,#b4bede 55%,#8a93b4 85%,#7c84a4 100%);border-bottom:2px solid #a4b2ea;box-sizing:border-box;"></div><span class="t" style="left:925.9px;top:375.8px;height:12px;line-height:12px;font-size:8.5px;color:#16162a;">30</span><span class="t" style="left:925.9px;top:409.3px;height:12px;line-height:12px;font-size:8.5px;color:#16162a;">20</span><span class="t" style="left:925.9px;top:443.5px;height:12px;line-height:12px;font-size:8.5px;color:#16162a;">10</span><span class="t" style="left:930.7px;top:476.3px;height:12px;line-height:12px;font-size:8.5px;color:#16162a;">0</span><div style="left:937.1px;top:380.8px;width:4.5px;height:1px;background:#6c7478;"></div><div style="left:937.6px;top:387.55px;width:4px;height:1px;background:#8a9498;"></div><div style="left:937.6px;top:394.3px;width:4px;height:1px;background:#8a9498;"></div><div style="left:937.6px;top:401.05px;width:4px;height:1px;background:#6c7478;"></div><div style="left:937.6px;top:407.8px;width:4px;height:1px;background:#222;"></div><div style="left:937.1px;top:414.55px;width:4.5px;height:1px;background:#333;"></div><div style="left:937.6px;top:421.3px;width:4px;height:1px;background:#555;"></div><div style="left:937.6px;top:428.05px;width:4px;height:1px;background:#222;"></div><div style="left:937.6px;top:434.8px;width:4px;height:1px;background:#555;"></div><div style="left:937.6px;top:441.55px;width:4px;height:1px;background:#222;"></div><div style="left:937.1px;top:448.3px;width:4.5px;height:1px;background:#8a9498;"></div><div style="left:937.6px;top:455.05px;width:4px;height:1px;background:#333;"></div><div style="left:937.6px;top:461.8px;width:4px;height:1px;background:#555;"></div><div style="left:937.6px;top:468.55px;width:4px;height:1px;background:#333;"></div><div style="left:937.6px;top:475.3px;width:4px;height:1px;background:#6c7478;"></div><div style="left:937.1px;top:482.05px;width:4.5px;height:1px;background:#222;"></div><span class="t" style="left:986.0px;top:382.0px;height:13px;line-height:13px;font-size:9.5px;color:#15153a;letter-spacing:0.17px;">IC heating(℃)</span><div class="inp" style="left:985.5px;top:397.3px;width:61.5px;height:16.5px;"></div><span class="t" style="left:988.2px;top:399.4px;height:13px;line-height:13px;font-size:9px;color:#222;">51</span><span class="t" style="left:1071.0px;top:382.0px;height:13px;line-height:13px;font-size:9.5px;color:#15153a;letter-spacing:0.19px;">Airflow Vol.(ml/min)</span><div class="inp lt" style="left:1070.5px;top:397.3px;width:61px;height:16.5px;"></div><span class="t" style="left:1073.2px;top:399.4px;height:13px;line-height:13px;font-size:9px;color:#222;">188</span><span class="t" style="left:985.5px;top:443.0px;height:13px;line-height:13px;font-size:9.5px;color:#15153a;letter-spacing:0.25px;">IC cooling(℃)</span><div class="inp" style="left:985.5px;top:458.3px;width:61.5px;height:17px;"></div><span class="t" style="left:988.2px;top:460.7px;height:13px;line-height:13px;font-size:9px;color:#222;">5</span><span class="t" style="left:1070.5px;top:443.0px;height:13px;line-height:13px;font-size:9.5px;color:#15153a;letter-spacing:0.18px;">Detector temp(℃)</span><div class="inp lt" style="left:1070.5px;top:458.3px;width:61px;height:17px;"></div><span class="t" style="left:1073.2px;top:460.7px;height:13px;line-height:13px;font-size:9px;color:#222;">45.01</span><div class="etch" style="left:860.5px;top:492.7px;width:319px;height:131.3px;"></div><div class="btn sm" style="left:874px;top:532.5px;width:50.5px;height:46.5px;"></div><span class="t" style="left:887.8px;top:548.5px;height:13px;line-height:13px;font-size:9.5px;color:#111;letter-spacing:-0.36px;">Clean</span><div class="a cframe g" style="left:937px;top:500.5px;width:183.3px;height:84.7px;"></div><svg class="a" style="left:937px;top:500.5px" width="183.3" height="84.7" viewBox="0 0 183.3 84.7"><path d="M29.83 47.56L31.98 45.66L44.38 60.06L42.67 61.57Z" fill="rgb(2, 238, 0)"/><path d="M31.56 46.02L33.75 44.17L45.79 58.87L44.04 60.35Z" fill="rgb(6, 239, 0)"/><path d="M33.32 44.53L35.55 42.73L47.23 57.72L45.45 59.15Z" fill="rgb(11, 239, 0)"/><path d="M35.11 43.07L37.39 41.33L48.69 56.61L46.88 57.99Z" fill="rgb(15, 240, 0)"/><path d="M36.95 41.66L39.27 39.98L50.19 55.53L48.34 56.87Z" fill="rgb(20, 241, 0)"/><path d="M38.82 40.30L41.18 38.68L51.71 54.49L49.83 55.79Z" fill="rgb(24, 241, 0)"/><path d="M40.72 38.98L43.12 37.42L53.25 53.49L51.34 54.74Z" fill="rgb(28, 242, 0)"/><path d="M42.65 37.72L45.09 36.21L54.82 52.53L52.88 53.73Z" fill="rgb(33, 243, 0)"/><path d="M44.61 36.50L47.09 35.05L56.42 51.60L54.44 52.75Z" fill="rgb(37, 243, 0)"/><path d="M46.60 35.32L49.11 33.94L58.03 50.72L56.03 51.82Z" fill="rgb(42, 244, 0)"/><path d="M48.62 34.20L51.17 32.88L59.67 49.87L57.64 50.92Z" fill="rgb(46, 245, 0)"/><path d="M50.67 33.13L53.25 31.87L61.33 49.07L59.27 50.07Z" fill="rgb(51, 245, 0)"/><path d="M52.75 32.11L55.35 30.91L63.00 48.31L60.93 49.26Z" fill="rgb(55, 246, 0)"/><path d="M54.85 31.14L57.48 30.01L64.70 47.59L62.60 48.49Z" fill="rgb(60, 247, 0)"/><path d="M56.97 30.22L59.63 29.16L66.41 46.91L64.29 47.75Z" fill="rgb(64, 247, 0)"/><path d="M59.11 29.36L61.80 28.36L68.14 46.27L66.00 47.07Z" fill="rgb(68, 248, 0)"/><path d="M61.28 28.55L63.99 27.61L69.88 45.68L67.72 46.42Z" fill="rgb(73, 249, 0)"/><path d="M63.46 27.79L66.19 26.92L71.64 45.13L69.46 45.82Z" fill="rgb(77, 249, 0)"/><path d="M65.66 27.09L68.42 26.29L73.41 44.62L71.22 45.26Z" fill="rgb(87, 250, 0)"/><path d="M67.88 26.44L70.65 25.71L75.20 44.16L72.99 44.74Z" fill="rgb(101, 250, 0)"/><path d="M70.12 25.84L72.91 25.18L76.99 43.74L74.77 44.27Z" fill="rgb(116, 251, 0)"/><path d="M72.36 25.31L75.17 24.72L78.79 43.37L76.56 43.84Z" fill="rgb(131, 251, 0)"/><path d="M74.63 24.82L77.44 24.30L80.61 43.04L78.36 43.45Z" fill="rgb(145, 251, 0)"/><path d="M76.90 24.40L79.73 23.95L82.43 42.75L80.17 43.11Z" fill="rgb(160, 252, 0)"/><path d="M79.18 24.03L82.02 23.65L84.25 42.52L81.99 42.82Z" fill="rgb(174, 252, 0)"/><path d="M81.47 23.71L84.32 23.40L86.08 42.32L83.81 42.57Z" fill="rgb(189, 253, 0)"/><path d="M83.77 23.46L86.62 23.22L87.92 42.17L85.64 42.36Z" fill="rgb(203, 253, 0)"/><path d="M86.07 23.26L88.93 23.09L89.76 42.07L87.48 42.20Z" fill="rgb(218, 253, 0)"/><path d="M88.38 23.11L91.24 23.02L91.60 42.01L89.32 42.09Z" fill="rgb(233, 254, 0)"/><path d="M90.69 23.03L93.55 23.00L93.44 42.00L91.16 42.02Z" fill="rgb(247, 254, 0)"/><path d="M93.00 23.00L95.87 23.04L95.28 42.04L93.00 42.00Z" fill="rgb(255, 249, 0)"/><path d="M95.31 23.03L98.18 23.14L97.12 42.11L94.84 42.02Z" fill="rgb(255, 237, 0)"/><path d="M97.62 23.11L100.48 23.30L98.96 42.24L96.68 42.09Z" fill="rgb(255, 226, 0)"/><path d="M99.93 23.26L102.78 23.51L100.80 42.41L98.52 42.20Z" fill="rgb(255, 214, 0)"/><path d="M102.23 23.46L105.08 23.78L102.63 42.62L100.36 42.36Z" fill="rgb(255, 202, 0)"/><path d="M104.53 23.71L107.37 24.11L104.45 42.88L102.19 42.57Z" fill="rgb(255, 191, 0)"/><path d="M106.82 24.03L109.65 24.49L106.27 43.19L104.01 42.82Z" fill="rgb(255, 179, 0)"/><path d="M109.10 24.40L111.92 24.93L108.07 43.54L105.83 43.11Z" fill="rgb(255, 168, 0)"/><path d="M111.37 24.82L114.18 25.43L109.87 43.94L107.64 43.45Z" fill="rgb(255, 156, 0)"/><path d="M113.64 25.31L116.42 25.98L111.66 44.38L109.44 43.84Z" fill="rgb(255, 145, 0)"/><path d="M115.88 25.84L118.65 26.59L113.44 44.86L111.23 44.27Z" fill="rgb(255, 133, 0)"/><path d="M118.12 26.44L120.87 27.25L115.20 45.39L113.01 44.74Z" fill="rgb(255, 120, 0)"/><path d="M120.34 27.09L123.06 27.97L116.96 45.96L114.78 45.26Z" fill="rgb(255, 105, 0)"/><path d="M122.54 27.79L125.24 28.74L118.69 46.57L116.54 45.82Z" fill="rgb(255, 91, 0)"/><path d="M124.72 28.55L127.40 29.56L120.41 47.23L118.28 46.42Z" fill="rgb(255, 77, 0)"/><path d="M126.89 29.36L129.54 30.44L122.12 47.93L120.00 47.07Z" fill="rgb(255, 62, 0)"/><path d="M129.03 30.22L131.66 31.37L123.80 48.67L121.71 47.75Z" fill="rgb(255, 48, 0)"/><path d="M131.15 31.14L133.75 32.35L125.47 49.45L123.40 48.49Z" fill="rgb(255, 34, 0)"/><path d="M133.25 32.11L135.82 33.38L127.12 50.27L125.07 49.26Z" fill="rgb(255, 19, 0)"/><path d="M135.33 33.13L137.86 34.47L128.75 51.14L126.73 50.07Z" fill="rgb(255, 9, 0)"/><path d="M137.38 34.20L139.88 35.60L130.35 52.04L128.36 50.92Z" fill="rgb(255, 8, 0)"/><path d="M139.40 35.32L141.86 36.78L131.93 52.98L129.97 51.82Z" fill="rgb(255, 7, 0)"/><path d="M141.39 36.50L143.82 38.02L133.49 53.96L131.56 52.75Z" fill="rgb(255, 6, 0)"/><path d="M143.35 37.72L145.74 39.30L135.03 54.99L133.12 53.73Z" fill="rgb(255, 6, 0)"/><path d="M145.28 38.98L147.64 40.62L136.53 56.04L134.66 54.74Z" fill="rgb(255, 5, 0)"/><path d="M147.18 40.30L149.50 42.00L138.02 57.14L136.17 55.79Z" fill="rgb(255, 4, 0)"/><path d="M149.05 41.66L151.32 43.42L139.47 58.27L137.66 56.87Z" fill="rgb(255, 3, 0)"/><path d="M150.89 43.07L153.11 44.88L140.89 59.44L139.12 57.99Z" fill="rgb(255, 2, 0)"/><path d="M152.68 44.53L154.86 46.39L142.29 60.64L140.55 59.15Z" fill="rgb(255, 1, 0)"/><path d="M154.44 46.02L156.58 47.94L143.66 61.87L141.96 60.35Z" fill="rgb(255, 0, 0)"/><path d="M29.5 47.2L27.1 44.6" stroke="#222" stroke-width="1"/><path d="M52.5 31.7L51.0 28.5" stroke="#222" stroke-width="1"/><path d="M79.1 23.5L78.6 20.1" stroke="#222" stroke-width="1"/><path d="M106.9 23.5L107.4 20.1" stroke="#222" stroke-width="1"/><path d="M133.5 31.7L135.0 28.5" stroke="#222" stroke-width="1"/><path d="M156.5 47.2L158.9 44.6" stroke="#222" stroke-width="1"/><defs><linearGradient id="ga797" x1="0" x2="1"><stop offset="0" stop-color="#ffffff"/><stop offset=".45" stop-color="#e6e6e6"/><stop offset=".7" stop-color="#cfcfcf"/><stop offset="1" stop-color="#a8a8a8"/></linearGradient></defs><path d="M46.7 79.7A68.4 68.4 0 0 1 137.4 78.9" stroke="url(#ga797)" stroke-width="1.7" fill="none"/><path d="M112.7 65.0L120.3 68.5L127.7 48.3L123.5 46.3Z" fill="#ff0000"/></svg><span class="t" style="left:958.5px;top:532.5px;height:13px;line-height:13px;font-size:9px;color:#16162a;">0</span><span class="t" style="left:977.5px;top:513.5px;height:13px;line-height:13px;font-size:9px;color:#16162a;">200</span><span class="t" style="left:1006.5px;top:506.0px;height:13px;line-height:13px;font-size:9px;color:#16162a;">400</span><span class="t" style="left:1036.0px;top:506.0px;height:13px;line-height:13px;font-size:9px;color:#16162a;">600</span><span class="t" style="left:1065.0px;top:513.5px;height:13px;line-height:13px;font-size:9px;color:#16162a;">800</span><span class="t" style="left:1091.0px;top:528.5px;height:13px;line-height:13px;font-size:9px;color:#16162a;">1000</span><span class="t" style="left:939.0px;top:590.2px;height:13px;line-height:13px;font-size:9.5px;color:#15153a;letter-spacing:0.17px;">Reactor temp(℃)</span><div class="a" style="left:1082.3px;top:589.2px;width:37.5px;height:16.6px;background:#fff;border:1px solid #c9d3da;box-sizing:border-box"></div><span class="t" style="left:1085.0px;top:591.0px;height:13px;line-height:13px;font-size:9px;color:#222;">797</span><span class="t" style="left:1140.0px;top:516.5px;height:13px;line-height:13px;font-size:9.5px;color:#15153a;letter-spacing:-0.15px;">Blow</span><div class="a" style="left:1143.2px;top:532.5px;width:11.6px;height:46.5px;border-radius:50%;background:linear-gradient(180deg,#6c7189 0,#8d93a8 22%,#c9ccd2 45%,#d9dadc 70%,#a9abb2 100%);box-shadow:0 0 0 1px rgba(120,130,140,.55);"></div><div class="a" style="left:1145px;top:548px;width:8px;height:29.5px;border-radius:50%;background:linear-gradient(90deg,#b4b6bc,#e6e6e8 50%,#b9bbc0);"></div><div class="etch" style="left:860.5px;top:623.6px;width:319px;height:65.4px;"></div><div class="a sbtn" style="left:874.5px;top:634px;width:91.5px;height:44.6px;"></div><svg class="a" style="left:883px;top:651px" width="11" height="13" viewBox="0 0 11 13"><path d="M1 1 L9.5 6.5 L1 12Z" fill="#e9e9e9" stroke="#777" stroke-width="1"/></svg><span class="t" style="left:923.5px;top:643.5px;height:13px;line-height:13px;font-size:9.5px;color:#15152a;letter-spacing:-0.21px;">Start</span><span class="t" style="left:921.0px;top:657.5px;height:13px;line-height:13px;font-size:9.5px;color:#15152a;letter-spacing:0.04px;">Integ.</span><span class="t" style="left:986.8px;top:631.8px;height:14px;line-height:14px;font-size:10px;color:#15153a;letter-spacing:-0.22px;">OK</span><div class="a" style="left:985.6px;top:647.6px;width:18.4px;height:22.4px;border-radius:50%;background:radial-gradient(ellipse at 50% 50%,#4aff12 0,#45f812 80%,#52e030 100%);box-shadow:1px 1.2px 1.2px #7d8f90,-0.6px -0.6px 1px #d6e6ea;"></div><div class="btn sm" style="left:1021.3px;top:641.4px;width:68.7px;height:32.2px;"></div><span class="t" style="left:1033.1px;top:650.2px;height:13px;line-height:13px;font-size:9.5px;color:#111;letter-spacing:0.06px;">Inlet pump</span><div class="btn sm" style="left:1098.3px;top:641.4px;width:68.3px;height:32.2px;"></div><span class="t" style="left:1106.0px;top:650.2px;height:13px;line-height:13px;font-size:9.5px;color:#111;letter-spacing:0.11px;">Outlet pump</span></div>
</body></html>
